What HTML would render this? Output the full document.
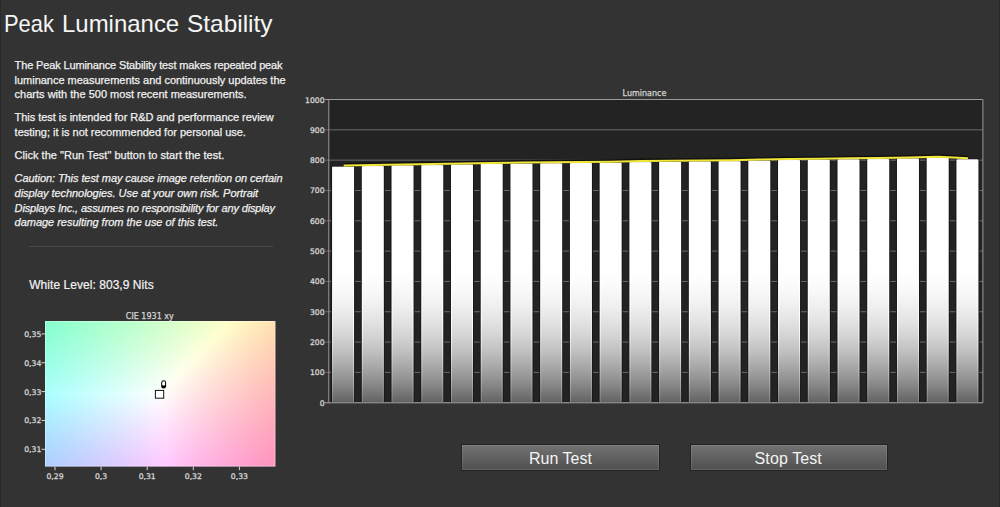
<!DOCTYPE html>
<html lang="en"><head><meta charset="utf-8"><title>Peak Luminance Stability</title>
<style>
html,body{margin:0;padding:0;background:#333333;}
body{width:1000px;height:507px;position:relative;overflow:hidden;font-family:"Liberation Sans",sans-serif;color:#f2f2f2;}
.t{position:absolute;white-space:pre;line-height:1;}
.p{font-size:11px;left:14.6px;color:#f0f0f0;-webkit-text-stroke:0.25px #f0f0f0;}
.i{font-style:italic;}
.btn{position:absolute;top:443.5px;height:25px;width:196.3px;border:1px solid #242424;box-shadow:inset 0 0 0 1px rgba(255,255,255,0.10);background:linear-gradient(#727272,#505050);color:#f4f4f4;font-size:16px;text-align:center;line-height:27.6px;}
svg{position:absolute;left:0;top:0;}
svg text{font-family:"DejaVu Sans","Liberation Sans",sans-serif;}
</style></head><body>
<div id="title" style="position:absolute;left:0;top:11.6px;height:24px;font-size:24px;line-height:1;color:#f6f6f6;white-space:pre;"><span style="position:absolute;left:4.2px;top:0;display:inline-block;transform-origin:0 0;transform:scaleX(0.913);">Peak</span> <span style="position:absolute;left:62.0px;top:0;display:inline-block;transform-origin:0 0;transform:scaleX(0.998);">Luminance</span> <span style="position:absolute;left:186.8px;top:0;display:inline-block;transform-origin:0 0;transform:scaleX(1.018);">Stability</span></div>
<div class="t p" style="top:60.00px;letter-spacing:-0.138px;">The Peak Luminance Stability test makes repeated peak</div>
<div class="t p" style="top:74.60px;letter-spacing:-0.022px;">luminance measurements and continuously updates the</div>
<div class="t p" style="top:89.00px;letter-spacing:0.006px;">charts with the 500 most recent measurements.</div>
<div class="t p" style="top:111.90px;letter-spacing:-0.040px;">This test is intended for R&amp;D and performance review</div>
<div class="t p" style="top:126.50px;letter-spacing:-0.009px;">testing; it is not recommended for personal use.</div>
<div class="t p" style="top:150.10px;letter-spacing:0.023px;">Click the "Run Test" button to start the test.</div>
<div class="t p i" style="top:173.30px;letter-spacing:-0.076px;">Caution: This test may cause image retention on certain</div>
<div class="t p i" style="top:187.90px;letter-spacing:-0.055px;">display technologies. Use at your own risk. Portrait</div>
<div class="t p i" style="top:202.50px;letter-spacing:-0.144px;">Displays Inc., assumes no responsibility for any display</div>
<div class="t p i" style="top:217.00px;letter-spacing:-0.025px;">damage resulting from the use of this test.</div>
<div style="position:absolute;left:0;top:0;width:1px;height:507px;background:#2a2a2a;"></div><div style="position:absolute;left:999px;top:0;width:1px;height:507px;background:#2b2b2b;"></div>
<div style="position:absolute;left:29px;top:245.5px;width:244px;height:1px;background:#4a4a4a;"></div>
<div class="t" style="left:29.2px;top:279px;font-size:12px;letter-spacing:0.05px;color:#f2f2f2;-webkit-text-stroke:0.2px #f2f2f2;">White Level: 803,9 Nits</div>
<div class="btn" style="left:461.3px;">Run Test</div>
<div class="btn" style="left:689.6px;letter-spacing:0.1px;text-indent:-1px;">Stop Test</div>
<svg width="1000" height="507" viewBox="0 0 1000 507">
<defs>
<linearGradient id="bar" gradientUnits="userSpaceOnUse" x1="0" y1="140" x2="0" y2="403"><stop offset="0.0000" stop-color="#ffffff"/><stop offset="0.4639" stop-color="#ffffff"/><stop offset="0.5133" stop-color="#fefefe"/><stop offset="0.5703" stop-color="#f9f9f9"/><stop offset="0.6274" stop-color="#f0f0f0"/><stop offset="0.6844" stop-color="#e4e4e4"/><stop offset="0.7414" stop-color="#d5d5d5"/><stop offset="0.7985" stop-color="#c2c2c2"/><stop offset="0.8555" stop-color="#ababab"/><stop offset="0.9125" stop-color="#919191"/><stop offset="0.9506" stop-color="#7d7d7d"/><stop offset="1.0000" stop-color="#616161"/></linearGradient>
<linearGradient id="bare" gradientUnits="userSpaceOnUse" x1="0" y1="140" x2="0" y2="403"><stop offset="0.0000" stop-color="#ffffff"/><stop offset="0.4639" stop-color="#ffffff"/><stop offset="0.5133" stop-color="#ffffff"/><stop offset="0.5703" stop-color="#ffffff"/><stop offset="0.6274" stop-color="#ffffff"/><stop offset="0.6844" stop-color="#ffffff"/><stop offset="0.7414" stop-color="#f7f7f7"/><stop offset="0.7985" stop-color="#e4e4e4"/><stop offset="0.8555" stop-color="#cdcdcd"/><stop offset="0.9125" stop-color="#b3b3b3"/><stop offset="0.9506" stop-color="#9f9f9f"/><stop offset="1.0000" stop-color="#838383"/></linearGradient>
<linearGradient id="c0"><stop offset="0.0000" stop-color="#86ffcd"/><stop offset="0.0435" stop-color="#8cffcd"/><stop offset="0.0870" stop-color="#92ffcd"/><stop offset="0.1304" stop-color="#98ffcd"/><stop offset="0.1739" stop-color="#9effcc"/><stop offset="0.2174" stop-color="#a4ffcc"/><stop offset="0.2609" stop-color="#aaffcc"/><stop offset="0.3043" stop-color="#b1ffcb"/><stop offset="0.3478" stop-color="#b7ffcb"/><stop offset="0.3913" stop-color="#beffcb"/><stop offset="0.4348" stop-color="#c4ffcb"/><stop offset="0.4783" stop-color="#cbffca"/><stop offset="0.5217" stop-color="#d2ffca"/><stop offset="0.5652" stop-color="#d8ffca"/><stop offset="0.6087" stop-color="#dfffc9"/><stop offset="0.6522" stop-color="#e6ffc9"/><stop offset="0.6957" stop-color="#edffc9"/><stop offset="0.7391" stop-color="#f5ffc8"/><stop offset="0.7826" stop-color="#fcffc8"/><stop offset="0.8261" stop-color="#fffbc5"/><stop offset="0.8696" stop-color="#fff4bf"/><stop offset="0.9130" stop-color="#ffedb9"/><stop offset="0.9565" stop-color="#ffe7b4"/><stop offset="1.0000" stop-color="#ffe1af"/></linearGradient>
<linearGradient id="c1"><stop offset="0.0000" stop-color="#87ffcf"/><stop offset="0.0435" stop-color="#8dffce"/><stop offset="0.0870" stop-color="#93ffce"/><stop offset="0.1304" stop-color="#99ffce"/><stop offset="0.1739" stop-color="#9fffcd"/><stop offset="0.2174" stop-color="#a5ffcd"/><stop offset="0.2609" stop-color="#abffcd"/><stop offset="0.3043" stop-color="#b2ffcd"/><stop offset="0.3478" stop-color="#b8ffcc"/><stop offset="0.3913" stop-color="#bfffcc"/><stop offset="0.4348" stop-color="#c5ffcc"/><stop offset="0.4783" stop-color="#ccffcc"/><stop offset="0.5217" stop-color="#d3ffcb"/><stop offset="0.5652" stop-color="#daffcb"/><stop offset="0.6087" stop-color="#e1ffcb"/><stop offset="0.6522" stop-color="#e8ffca"/><stop offset="0.6957" stop-color="#efffca"/><stop offset="0.7391" stop-color="#f6ffca"/><stop offset="0.7826" stop-color="#fdffc9"/><stop offset="0.8261" stop-color="#fffac5"/><stop offset="0.8696" stop-color="#fff3bf"/><stop offset="0.9130" stop-color="#ffecba"/><stop offset="0.9565" stop-color="#ffe6b4"/><stop offset="1.0000" stop-color="#ffe0af"/></linearGradient>
<linearGradient id="c2"><stop offset="0.0000" stop-color="#87ffd0"/><stop offset="0.0435" stop-color="#8dffcf"/><stop offset="0.0870" stop-color="#94ffcf"/><stop offset="0.1304" stop-color="#9affcf"/><stop offset="0.1739" stop-color="#a0ffcf"/><stop offset="0.2174" stop-color="#a6ffce"/><stop offset="0.2609" stop-color="#acffce"/><stop offset="0.3043" stop-color="#b3ffce"/><stop offset="0.3478" stop-color="#b9ffce"/><stop offset="0.3913" stop-color="#c0ffcd"/><stop offset="0.4348" stop-color="#c7ffcd"/><stop offset="0.4783" stop-color="#cdffcd"/><stop offset="0.5217" stop-color="#d4ffcd"/><stop offset="0.5652" stop-color="#dbffcc"/><stop offset="0.6087" stop-color="#e2ffcc"/><stop offset="0.6522" stop-color="#e9ffcc"/><stop offset="0.6957" stop-color="#f0ffcb"/><stop offset="0.7391" stop-color="#f7ffcb"/><stop offset="0.7826" stop-color="#ffffcb"/><stop offset="0.8261" stop-color="#fff8c5"/><stop offset="0.8696" stop-color="#fff1bf"/><stop offset="0.9130" stop-color="#ffebba"/><stop offset="0.9565" stop-color="#ffe4b4"/><stop offset="1.0000" stop-color="#ffdeaf"/></linearGradient>
<linearGradient id="c3"><stop offset="0.0000" stop-color="#88ffd1"/><stop offset="0.0435" stop-color="#8effd1"/><stop offset="0.0870" stop-color="#94ffd0"/><stop offset="0.1304" stop-color="#9bffd0"/><stop offset="0.1739" stop-color="#a1ffd0"/><stop offset="0.2174" stop-color="#a7ffd0"/><stop offset="0.2609" stop-color="#aeffcf"/><stop offset="0.3043" stop-color="#b4ffcf"/><stop offset="0.3478" stop-color="#baffcf"/><stop offset="0.3913" stop-color="#c1ffcf"/><stop offset="0.4348" stop-color="#c8ffce"/><stop offset="0.4783" stop-color="#ceffce"/><stop offset="0.5217" stop-color="#d5ffce"/><stop offset="0.5652" stop-color="#dcffce"/><stop offset="0.6087" stop-color="#e3ffcd"/><stop offset="0.6522" stop-color="#eaffcd"/><stop offset="0.6957" stop-color="#f1ffcd"/><stop offset="0.7391" stop-color="#f9ffcc"/><stop offset="0.7826" stop-color="#fffecb"/><stop offset="0.8261" stop-color="#fff7c5"/><stop offset="0.8696" stop-color="#fff0c0"/><stop offset="0.9130" stop-color="#ffe9ba"/><stop offset="0.9565" stop-color="#ffe3b5"/><stop offset="1.0000" stop-color="#ffddb0"/></linearGradient>
<linearGradient id="c4"><stop offset="0.0000" stop-color="#89ffd2"/><stop offset="0.0435" stop-color="#8fffd2"/><stop offset="0.0870" stop-color="#95ffd2"/><stop offset="0.1304" stop-color="#9cffd1"/><stop offset="0.1739" stop-color="#a2ffd1"/><stop offset="0.2174" stop-color="#a8ffd1"/><stop offset="0.2609" stop-color="#afffd1"/><stop offset="0.3043" stop-color="#b5ffd0"/><stop offset="0.3478" stop-color="#bcffd0"/><stop offset="0.3913" stop-color="#c2ffd0"/><stop offset="0.4348" stop-color="#c9ffd0"/><stop offset="0.4783" stop-color="#d0ffcf"/><stop offset="0.5217" stop-color="#d7ffcf"/><stop offset="0.5652" stop-color="#ddffcf"/><stop offset="0.6087" stop-color="#e5ffcf"/><stop offset="0.6522" stop-color="#ecffce"/><stop offset="0.6957" stop-color="#f3ffce"/><stop offset="0.7391" stop-color="#faffce"/><stop offset="0.7826" stop-color="#fffdcc"/><stop offset="0.8261" stop-color="#fff5c5"/><stop offset="0.8696" stop-color="#ffefc0"/><stop offset="0.9130" stop-color="#ffe8ba"/><stop offset="0.9565" stop-color="#ffe2b5"/><stop offset="1.0000" stop-color="#ffdcb0"/></linearGradient>
<linearGradient id="c5"><stop offset="0.0000" stop-color="#8affd3"/><stop offset="0.0435" stop-color="#90ffd3"/><stop offset="0.0870" stop-color="#96ffd3"/><stop offset="0.1304" stop-color="#9dffd3"/><stop offset="0.1739" stop-color="#a3ffd3"/><stop offset="0.2174" stop-color="#a9ffd2"/><stop offset="0.2609" stop-color="#b0ffd2"/><stop offset="0.3043" stop-color="#b6ffd2"/><stop offset="0.3478" stop-color="#bdffd2"/><stop offset="0.3913" stop-color="#c3ffd1"/><stop offset="0.4348" stop-color="#caffd1"/><stop offset="0.4783" stop-color="#d1ffd1"/><stop offset="0.5217" stop-color="#d8ffd0"/><stop offset="0.5652" stop-color="#dfffd0"/><stop offset="0.6087" stop-color="#e6ffd0"/><stop offset="0.6522" stop-color="#edffd0"/><stop offset="0.6957" stop-color="#f4ffcf"/><stop offset="0.7391" stop-color="#fbffcf"/><stop offset="0.7826" stop-color="#fffbcc"/><stop offset="0.8261" stop-color="#fff4c6"/><stop offset="0.8696" stop-color="#ffedc0"/><stop offset="0.9130" stop-color="#ffe7ba"/><stop offset="0.9565" stop-color="#ffe1b5"/><stop offset="1.0000" stop-color="#ffdbb0"/></linearGradient>
<linearGradient id="c6"><stop offset="0.0000" stop-color="#8bffd5"/><stop offset="0.0435" stop-color="#91ffd4"/><stop offset="0.0870" stop-color="#97ffd4"/><stop offset="0.1304" stop-color="#9effd4"/><stop offset="0.1739" stop-color="#a4ffd4"/><stop offset="0.2174" stop-color="#aaffd4"/><stop offset="0.2609" stop-color="#b1ffd3"/><stop offset="0.3043" stop-color="#b7ffd3"/><stop offset="0.3478" stop-color="#beffd3"/><stop offset="0.3913" stop-color="#c5ffd3"/><stop offset="0.4348" stop-color="#cbffd2"/><stop offset="0.4783" stop-color="#d2ffd2"/><stop offset="0.5217" stop-color="#d9ffd2"/><stop offset="0.5652" stop-color="#e0ffd2"/><stop offset="0.6087" stop-color="#e7ffd1"/><stop offset="0.6522" stop-color="#eeffd1"/><stop offset="0.6957" stop-color="#f6ffd1"/><stop offset="0.7391" stop-color="#fdffd0"/><stop offset="0.7826" stop-color="#fffacc"/><stop offset="0.8261" stop-color="#fff3c6"/><stop offset="0.8696" stop-color="#ffecc0"/><stop offset="0.9130" stop-color="#ffe6bb"/><stop offset="0.9565" stop-color="#ffdfb5"/><stop offset="1.0000" stop-color="#ffd9b0"/></linearGradient>
<linearGradient id="c7"><stop offset="0.0000" stop-color="#8cffd6"/><stop offset="0.0435" stop-color="#92ffd6"/><stop offset="0.0870" stop-color="#98ffd6"/><stop offset="0.1304" stop-color="#9fffd5"/><stop offset="0.1739" stop-color="#a5ffd5"/><stop offset="0.2174" stop-color="#abffd5"/><stop offset="0.2609" stop-color="#b2ffd5"/><stop offset="0.3043" stop-color="#b8ffd4"/><stop offset="0.3478" stop-color="#bfffd4"/><stop offset="0.3913" stop-color="#c6ffd4"/><stop offset="0.4348" stop-color="#ccffd4"/><stop offset="0.4783" stop-color="#d3ffd3"/><stop offset="0.5217" stop-color="#daffd3"/><stop offset="0.5652" stop-color="#e1ffd3"/><stop offset="0.6087" stop-color="#e8ffd3"/><stop offset="0.6522" stop-color="#f0ffd2"/><stop offset="0.6957" stop-color="#f7ffd2"/><stop offset="0.7391" stop-color="#feffd2"/><stop offset="0.7826" stop-color="#fff8cc"/><stop offset="0.8261" stop-color="#fff1c6"/><stop offset="0.8696" stop-color="#ffebc0"/><stop offset="0.9130" stop-color="#ffe4bb"/><stop offset="0.9565" stop-color="#ffdeb6"/><stop offset="1.0000" stop-color="#ffd8b1"/></linearGradient>
<linearGradient id="c8"><stop offset="0.0000" stop-color="#8dffd7"/><stop offset="0.0435" stop-color="#93ffd7"/><stop offset="0.0870" stop-color="#99ffd7"/><stop offset="0.1304" stop-color="#a0ffd7"/><stop offset="0.1739" stop-color="#a6ffd6"/><stop offset="0.2174" stop-color="#acffd6"/><stop offset="0.2609" stop-color="#b3ffd6"/><stop offset="0.3043" stop-color="#b9ffd6"/><stop offset="0.3478" stop-color="#c0ffd5"/><stop offset="0.3913" stop-color="#c7ffd5"/><stop offset="0.4348" stop-color="#ceffd5"/><stop offset="0.4783" stop-color="#d5ffd5"/><stop offset="0.5217" stop-color="#dcffd5"/><stop offset="0.5652" stop-color="#e3ffd4"/><stop offset="0.6087" stop-color="#eaffd4"/><stop offset="0.6522" stop-color="#f1ffd4"/><stop offset="0.6957" stop-color="#f8ffd4"/><stop offset="0.7391" stop-color="#fffed3"/><stop offset="0.7826" stop-color="#fff7cc"/><stop offset="0.8261" stop-color="#fff0c6"/><stop offset="0.8696" stop-color="#ffe9c1"/><stop offset="0.9130" stop-color="#ffe3bb"/><stop offset="0.9565" stop-color="#ffddb6"/><stop offset="1.0000" stop-color="#ffd7b1"/></linearGradient>
<linearGradient id="c9"><stop offset="0.0000" stop-color="#8effd9"/><stop offset="0.0435" stop-color="#94ffd8"/><stop offset="0.0870" stop-color="#9affd8"/><stop offset="0.1304" stop-color="#a1ffd8"/><stop offset="0.1739" stop-color="#a7ffd8"/><stop offset="0.2174" stop-color="#adffd7"/><stop offset="0.2609" stop-color="#b4ffd7"/><stop offset="0.3043" stop-color="#bbffd7"/><stop offset="0.3478" stop-color="#c1ffd7"/><stop offset="0.3913" stop-color="#c8ffd7"/><stop offset="0.4348" stop-color="#cfffd6"/><stop offset="0.4783" stop-color="#d6ffd6"/><stop offset="0.5217" stop-color="#ddffd6"/><stop offset="0.5652" stop-color="#e4ffd6"/><stop offset="0.6087" stop-color="#ebffd5"/><stop offset="0.6522" stop-color="#f2ffd5"/><stop offset="0.6957" stop-color="#faffd5"/><stop offset="0.7391" stop-color="#fffdd3"/><stop offset="0.7826" stop-color="#fff6cd"/><stop offset="0.8261" stop-color="#ffefc7"/><stop offset="0.8696" stop-color="#ffe8c1"/><stop offset="0.9130" stop-color="#ffe2bb"/><stop offset="0.9565" stop-color="#ffdcb6"/><stop offset="1.0000" stop-color="#ffd6b1"/></linearGradient>
<linearGradient id="c10"><stop offset="0.0000" stop-color="#8fffda"/><stop offset="0.0435" stop-color="#95ffda"/><stop offset="0.0870" stop-color="#9bffd9"/><stop offset="0.1304" stop-color="#a2ffd9"/><stop offset="0.1739" stop-color="#a8ffd9"/><stop offset="0.2174" stop-color="#afffd9"/><stop offset="0.2609" stop-color="#b5ffd9"/><stop offset="0.3043" stop-color="#bcffd8"/><stop offset="0.3478" stop-color="#c2ffd8"/><stop offset="0.3913" stop-color="#c9ffd8"/><stop offset="0.4348" stop-color="#d0ffd8"/><stop offset="0.4783" stop-color="#d7ffd7"/><stop offset="0.5217" stop-color="#deffd7"/><stop offset="0.5652" stop-color="#e5ffd7"/><stop offset="0.6087" stop-color="#ecffd7"/><stop offset="0.6522" stop-color="#f4ffd7"/><stop offset="0.6957" stop-color="#fbffd6"/><stop offset="0.7391" stop-color="#fffbd3"/><stop offset="0.7826" stop-color="#fff4cd"/><stop offset="0.8261" stop-color="#ffedc7"/><stop offset="0.8696" stop-color="#ffe7c1"/><stop offset="0.9130" stop-color="#ffe1bc"/><stop offset="0.9565" stop-color="#ffdab6"/><stop offset="1.0000" stop-color="#ffd5b1"/></linearGradient>
<linearGradient id="c11"><stop offset="0.0000" stop-color="#90ffdb"/><stop offset="0.0435" stop-color="#96ffdb"/><stop offset="0.0870" stop-color="#9cffdb"/><stop offset="0.1304" stop-color="#a3ffda"/><stop offset="0.1739" stop-color="#a9ffda"/><stop offset="0.2174" stop-color="#b0ffda"/><stop offset="0.2609" stop-color="#b6ffda"/><stop offset="0.3043" stop-color="#bdffda"/><stop offset="0.3478" stop-color="#c4ffd9"/><stop offset="0.3913" stop-color="#caffd9"/><stop offset="0.4348" stop-color="#d1ffd9"/><stop offset="0.4783" stop-color="#d8ffd9"/><stop offset="0.5217" stop-color="#dfffd9"/><stop offset="0.5652" stop-color="#e7ffd8"/><stop offset="0.6087" stop-color="#eeffd8"/><stop offset="0.6522" stop-color="#f5ffd8"/><stop offset="0.6957" stop-color="#fdffd8"/><stop offset="0.7391" stop-color="#fffad3"/><stop offset="0.7826" stop-color="#fff3cd"/><stop offset="0.8261" stop-color="#ffecc7"/><stop offset="0.8696" stop-color="#ffe6c1"/><stop offset="0.9130" stop-color="#ffdfbc"/><stop offset="0.9565" stop-color="#ffd9b7"/><stop offset="1.0000" stop-color="#ffd4b2"/></linearGradient>
<linearGradient id="c12"><stop offset="0.0000" stop-color="#91ffdc"/><stop offset="0.0435" stop-color="#97ffdc"/><stop offset="0.0870" stop-color="#9dffdc"/><stop offset="0.1304" stop-color="#a4ffdc"/><stop offset="0.1739" stop-color="#aaffdc"/><stop offset="0.2174" stop-color="#b1ffdb"/><stop offset="0.2609" stop-color="#b7ffdb"/><stop offset="0.3043" stop-color="#beffdb"/><stop offset="0.3478" stop-color="#c5ffdb"/><stop offset="0.3913" stop-color="#ccffdb"/><stop offset="0.4348" stop-color="#d3ffda"/><stop offset="0.4783" stop-color="#daffda"/><stop offset="0.5217" stop-color="#e1ffda"/><stop offset="0.5652" stop-color="#e8ffda"/><stop offset="0.6087" stop-color="#efffda"/><stop offset="0.6522" stop-color="#f7ffd9"/><stop offset="0.6957" stop-color="#feffd9"/><stop offset="0.7391" stop-color="#fff9d3"/><stop offset="0.7826" stop-color="#fff1cd"/><stop offset="0.8261" stop-color="#ffebc7"/><stop offset="0.8696" stop-color="#ffe4c2"/><stop offset="0.9130" stop-color="#ffdebc"/><stop offset="0.9565" stop-color="#ffd8b7"/><stop offset="1.0000" stop-color="#ffd2b2"/></linearGradient>
<linearGradient id="c13"><stop offset="0.0000" stop-color="#92ffde"/><stop offset="0.0435" stop-color="#98ffde"/><stop offset="0.0870" stop-color="#9effdd"/><stop offset="0.1304" stop-color="#a5ffdd"/><stop offset="0.1739" stop-color="#abffdd"/><stop offset="0.2174" stop-color="#b2ffdd"/><stop offset="0.2609" stop-color="#b8ffdd"/><stop offset="0.3043" stop-color="#bfffdc"/><stop offset="0.3478" stop-color="#c6ffdc"/><stop offset="0.3913" stop-color="#cdffdc"/><stop offset="0.4348" stop-color="#d4ffdc"/><stop offset="0.4783" stop-color="#dbffdc"/><stop offset="0.5217" stop-color="#e2ffdb"/><stop offset="0.5652" stop-color="#e9ffdb"/><stop offset="0.6087" stop-color="#f1ffdb"/><stop offset="0.6522" stop-color="#f8ffdb"/><stop offset="0.6957" stop-color="#fffeda"/><stop offset="0.7391" stop-color="#fff7d4"/><stop offset="0.7826" stop-color="#fff0cd"/><stop offset="0.8261" stop-color="#ffe9c7"/><stop offset="0.8696" stop-color="#ffe3c2"/><stop offset="0.9130" stop-color="#ffddbc"/><stop offset="0.9565" stop-color="#ffd7b7"/><stop offset="1.0000" stop-color="#ffd1b2"/></linearGradient>
<linearGradient id="c14"><stop offset="0.0000" stop-color="#93ffdf"/><stop offset="0.0435" stop-color="#99ffdf"/><stop offset="0.0870" stop-color="#9fffdf"/><stop offset="0.1304" stop-color="#a6ffde"/><stop offset="0.1739" stop-color="#acffde"/><stop offset="0.2174" stop-color="#b3ffde"/><stop offset="0.2609" stop-color="#baffde"/><stop offset="0.3043" stop-color="#c0ffde"/><stop offset="0.3478" stop-color="#c7ffde"/><stop offset="0.3913" stop-color="#ceffdd"/><stop offset="0.4348" stop-color="#d5ffdd"/><stop offset="0.4783" stop-color="#dcffdd"/><stop offset="0.5217" stop-color="#e3ffdd"/><stop offset="0.5652" stop-color="#ebffdd"/><stop offset="0.6087" stop-color="#f2ffdc"/><stop offset="0.6522" stop-color="#f9ffdc"/><stop offset="0.6957" stop-color="#fffdda"/><stop offset="0.7391" stop-color="#fff6d4"/><stop offset="0.7826" stop-color="#ffefce"/><stop offset="0.8261" stop-color="#ffe8c8"/><stop offset="0.8696" stop-color="#ffe2c2"/><stop offset="0.9130" stop-color="#ffdcbc"/><stop offset="0.9565" stop-color="#ffd6b7"/><stop offset="1.0000" stop-color="#ffd0b2"/></linearGradient>
<linearGradient id="c15"><stop offset="0.0000" stop-color="#94ffe0"/><stop offset="0.0435" stop-color="#9affe0"/><stop offset="0.0870" stop-color="#a0ffe0"/><stop offset="0.1304" stop-color="#a7ffe0"/><stop offset="0.1739" stop-color="#adffe0"/><stop offset="0.2174" stop-color="#b4ffdf"/><stop offset="0.2609" stop-color="#bbffdf"/><stop offset="0.3043" stop-color="#c1ffdf"/><stop offset="0.3478" stop-color="#c8ffdf"/><stop offset="0.3913" stop-color="#cfffdf"/><stop offset="0.4348" stop-color="#d6ffdf"/><stop offset="0.4783" stop-color="#ddffde"/><stop offset="0.5217" stop-color="#e5ffde"/><stop offset="0.5652" stop-color="#ecffde"/><stop offset="0.6087" stop-color="#f3ffde"/><stop offset="0.6522" stop-color="#fbffde"/><stop offset="0.6957" stop-color="#fffcdb"/><stop offset="0.7391" stop-color="#fff4d4"/><stop offset="0.7826" stop-color="#ffedce"/><stop offset="0.8261" stop-color="#ffe7c8"/><stop offset="0.8696" stop-color="#ffe0c2"/><stop offset="0.9130" stop-color="#ffdabd"/><stop offset="0.9565" stop-color="#ffd4b7"/><stop offset="1.0000" stop-color="#ffcfb2"/></linearGradient>
<linearGradient id="c16"><stop offset="0.0000" stop-color="#95ffe2"/><stop offset="0.0435" stop-color="#9bffe2"/><stop offset="0.0870" stop-color="#a1ffe1"/><stop offset="0.1304" stop-color="#a8ffe1"/><stop offset="0.1739" stop-color="#aeffe1"/><stop offset="0.2174" stop-color="#b5ffe1"/><stop offset="0.2609" stop-color="#bcffe1"/><stop offset="0.3043" stop-color="#c3ffe1"/><stop offset="0.3478" stop-color="#caffe0"/><stop offset="0.3913" stop-color="#d1ffe0"/><stop offset="0.4348" stop-color="#d8ffe0"/><stop offset="0.4783" stop-color="#dfffe0"/><stop offset="0.5217" stop-color="#e6ffe0"/><stop offset="0.5652" stop-color="#edffdf"/><stop offset="0.6087" stop-color="#f5ffdf"/><stop offset="0.6522" stop-color="#fcffdf"/><stop offset="0.6957" stop-color="#fffadb"/><stop offset="0.7391" stop-color="#fff3d4"/><stop offset="0.7826" stop-color="#ffecce"/><stop offset="0.8261" stop-color="#ffe5c8"/><stop offset="0.8696" stop-color="#ffdfc2"/><stop offset="0.9130" stop-color="#ffd9bd"/><stop offset="0.9565" stop-color="#ffd3b8"/><stop offset="1.0000" stop-color="#ffceb3"/></linearGradient>
<linearGradient id="c17"><stop offset="0.0000" stop-color="#96ffe3"/><stop offset="0.0435" stop-color="#9cffe3"/><stop offset="0.0870" stop-color="#a2ffe3"/><stop offset="0.1304" stop-color="#a9ffe3"/><stop offset="0.1739" stop-color="#b0ffe2"/><stop offset="0.2174" stop-color="#b6ffe2"/><stop offset="0.2609" stop-color="#bdffe2"/><stop offset="0.3043" stop-color="#c4ffe2"/><stop offset="0.3478" stop-color="#cbffe2"/><stop offset="0.3913" stop-color="#d2ffe2"/><stop offset="0.4348" stop-color="#d9ffe1"/><stop offset="0.4783" stop-color="#e0ffe1"/><stop offset="0.5217" stop-color="#e7ffe1"/><stop offset="0.5652" stop-color="#efffe1"/><stop offset="0.6087" stop-color="#f6ffe1"/><stop offset="0.6522" stop-color="#feffe1"/><stop offset="0.6957" stop-color="#fff9db"/><stop offset="0.7391" stop-color="#fff2d4"/><stop offset="0.7826" stop-color="#ffebce"/><stop offset="0.8261" stop-color="#ffe4c8"/><stop offset="0.8696" stop-color="#ffdec3"/><stop offset="0.9130" stop-color="#ffd8bd"/><stop offset="0.9565" stop-color="#ffd2b8"/><stop offset="1.0000" stop-color="#ffcdb3"/></linearGradient>
<linearGradient id="c18"><stop offset="0.0000" stop-color="#97ffe4"/><stop offset="0.0435" stop-color="#9dffe4"/><stop offset="0.0870" stop-color="#a3ffe4"/><stop offset="0.1304" stop-color="#aaffe4"/><stop offset="0.1739" stop-color="#b1ffe4"/><stop offset="0.2174" stop-color="#b7ffe4"/><stop offset="0.2609" stop-color="#beffe3"/><stop offset="0.3043" stop-color="#c5ffe3"/><stop offset="0.3478" stop-color="#ccffe3"/><stop offset="0.3913" stop-color="#d3ffe3"/><stop offset="0.4348" stop-color="#daffe3"/><stop offset="0.4783" stop-color="#e1ffe3"/><stop offset="0.5217" stop-color="#e9ffe3"/><stop offset="0.5652" stop-color="#f0ffe2"/><stop offset="0.6087" stop-color="#f8ffe2"/><stop offset="0.6522" stop-color="#ffffe2"/><stop offset="0.6957" stop-color="#fff7db"/><stop offset="0.7391" stop-color="#fff0d5"/><stop offset="0.7826" stop-color="#ffe9ce"/><stop offset="0.8261" stop-color="#ffe3c8"/><stop offset="0.8696" stop-color="#ffddc3"/><stop offset="0.9130" stop-color="#ffd7bd"/><stop offset="0.9565" stop-color="#ffd1b8"/><stop offset="1.0000" stop-color="#ffcbb3"/></linearGradient>
<linearGradient id="c19"><stop offset="0.0000" stop-color="#98ffe6"/><stop offset="0.0435" stop-color="#9effe6"/><stop offset="0.0870" stop-color="#a4ffe5"/><stop offset="0.1304" stop-color="#abffe5"/><stop offset="0.1739" stop-color="#b2ffe5"/><stop offset="0.2174" stop-color="#b8ffe5"/><stop offset="0.2609" stop-color="#bfffe5"/><stop offset="0.3043" stop-color="#c6ffe5"/><stop offset="0.3478" stop-color="#cdffe5"/><stop offset="0.3913" stop-color="#d4ffe4"/><stop offset="0.4348" stop-color="#dbffe4"/><stop offset="0.4783" stop-color="#e3ffe4"/><stop offset="0.5217" stop-color="#eaffe4"/><stop offset="0.5652" stop-color="#f2ffe4"/><stop offset="0.6087" stop-color="#f9ffe4"/><stop offset="0.6522" stop-color="#fffde2"/><stop offset="0.6957" stop-color="#fff6db"/><stop offset="0.7391" stop-color="#ffefd5"/><stop offset="0.7826" stop-color="#ffe8cf"/><stop offset="0.8261" stop-color="#ffe2c9"/><stop offset="0.8696" stop-color="#ffdbc3"/><stop offset="0.9130" stop-color="#ffd5be"/><stop offset="0.9565" stop-color="#ffd0b8"/><stop offset="1.0000" stop-color="#ffcab3"/></linearGradient>
<linearGradient id="c20"><stop offset="0.0000" stop-color="#99ffe7"/><stop offset="0.0435" stop-color="#9fffe7"/><stop offset="0.0870" stop-color="#a6ffe7"/><stop offset="0.1304" stop-color="#acffe7"/><stop offset="0.1739" stop-color="#b3ffe7"/><stop offset="0.2174" stop-color="#baffe6"/><stop offset="0.2609" stop-color="#c0ffe6"/><stop offset="0.3043" stop-color="#c7ffe6"/><stop offset="0.3478" stop-color="#ceffe6"/><stop offset="0.3913" stop-color="#d6ffe6"/><stop offset="0.4348" stop-color="#ddffe6"/><stop offset="0.4783" stop-color="#e4ffe6"/><stop offset="0.5217" stop-color="#ebffe5"/><stop offset="0.5652" stop-color="#f3ffe5"/><stop offset="0.6087" stop-color="#fbffe5"/><stop offset="0.6522" stop-color="#fffce2"/><stop offset="0.6957" stop-color="#fff4db"/><stop offset="0.7391" stop-color="#ffedd5"/><stop offset="0.7826" stop-color="#ffe7cf"/><stop offset="0.8261" stop-color="#ffe0c9"/><stop offset="0.8696" stop-color="#ffdac3"/><stop offset="0.9130" stop-color="#ffd4be"/><stop offset="0.9565" stop-color="#ffcfb9"/><stop offset="1.0000" stop-color="#ffc9b4"/></linearGradient>
<linearGradient id="c21"><stop offset="0.0000" stop-color="#9affe8"/><stop offset="0.0435" stop-color="#a0ffe8"/><stop offset="0.0870" stop-color="#a7ffe8"/><stop offset="0.1304" stop-color="#adffe8"/><stop offset="0.1739" stop-color="#b4ffe8"/><stop offset="0.2174" stop-color="#bbffe8"/><stop offset="0.2609" stop-color="#c2ffe8"/><stop offset="0.3043" stop-color="#c9ffe8"/><stop offset="0.3478" stop-color="#d0ffe7"/><stop offset="0.3913" stop-color="#d7ffe7"/><stop offset="0.4348" stop-color="#deffe7"/><stop offset="0.4783" stop-color="#e5ffe7"/><stop offset="0.5217" stop-color="#edffe7"/><stop offset="0.5652" stop-color="#f4ffe7"/><stop offset="0.6087" stop-color="#fcffe7"/><stop offset="0.6522" stop-color="#fffae2"/><stop offset="0.6957" stop-color="#fff3dc"/><stop offset="0.7391" stop-color="#ffecd5"/><stop offset="0.7826" stop-color="#ffe5cf"/><stop offset="0.8261" stop-color="#ffdfc9"/><stop offset="0.8696" stop-color="#ffd9c3"/><stop offset="0.9130" stop-color="#ffd3be"/><stop offset="0.9565" stop-color="#ffcdb9"/><stop offset="1.0000" stop-color="#ffc8b4"/></linearGradient>
<linearGradient id="c22"><stop offset="0.0000" stop-color="#9bffea"/><stop offset="0.0435" stop-color="#a1ffea"/><stop offset="0.0870" stop-color="#a8ffea"/><stop offset="0.1304" stop-color="#aeffea"/><stop offset="0.1739" stop-color="#b5ffe9"/><stop offset="0.2174" stop-color="#bcffe9"/><stop offset="0.2609" stop-color="#c3ffe9"/><stop offset="0.3043" stop-color="#caffe9"/><stop offset="0.3478" stop-color="#d1ffe9"/><stop offset="0.3913" stop-color="#d8ffe9"/><stop offset="0.4348" stop-color="#dfffe9"/><stop offset="0.4783" stop-color="#e7ffe9"/><stop offset="0.5217" stop-color="#eeffe8"/><stop offset="0.5652" stop-color="#f6ffe8"/><stop offset="0.6087" stop-color="#fdffe8"/><stop offset="0.6522" stop-color="#fff9e3"/><stop offset="0.6957" stop-color="#fff2dc"/><stop offset="0.7391" stop-color="#ffebd5"/><stop offset="0.7826" stop-color="#ffe4cf"/><stop offset="0.8261" stop-color="#ffdec9"/><stop offset="0.8696" stop-color="#ffd8c4"/><stop offset="0.9130" stop-color="#ffd2be"/><stop offset="0.9565" stop-color="#ffccb9"/><stop offset="1.0000" stop-color="#ffc7b4"/></linearGradient>
<linearGradient id="c23"><stop offset="0.0000" stop-color="#9cffeb"/><stop offset="0.0435" stop-color="#a2ffeb"/><stop offset="0.0870" stop-color="#a9ffeb"/><stop offset="0.1304" stop-color="#afffeb"/><stop offset="0.1739" stop-color="#b6ffeb"/><stop offset="0.2174" stop-color="#bdffeb"/><stop offset="0.2609" stop-color="#c4ffeb"/><stop offset="0.3043" stop-color="#cbffeb"/><stop offset="0.3478" stop-color="#d2ffea"/><stop offset="0.3913" stop-color="#d9ffea"/><stop offset="0.4348" stop-color="#e1ffea"/><stop offset="0.4783" stop-color="#e8ffea"/><stop offset="0.5217" stop-color="#f0ffea"/><stop offset="0.5652" stop-color="#f7ffea"/><stop offset="0.6087" stop-color="#ffffea"/><stop offset="0.6522" stop-color="#fff8e3"/><stop offset="0.6957" stop-color="#fff0dc"/><stop offset="0.7391" stop-color="#ffe9d6"/><stop offset="0.7826" stop-color="#ffe3cf"/><stop offset="0.8261" stop-color="#ffdcca"/><stop offset="0.8696" stop-color="#ffd6c4"/><stop offset="0.9130" stop-color="#ffd1be"/><stop offset="0.9565" stop-color="#ffcbb9"/><stop offset="1.0000" stop-color="#ffc6b4"/></linearGradient>
<linearGradient id="c24"><stop offset="0.0000" stop-color="#9dffed"/><stop offset="0.0435" stop-color="#a3ffed"/><stop offset="0.0870" stop-color="#aaffec"/><stop offset="0.1304" stop-color="#b1ffec"/><stop offset="0.1739" stop-color="#b7ffec"/><stop offset="0.2174" stop-color="#beffec"/><stop offset="0.2609" stop-color="#c5ffec"/><stop offset="0.3043" stop-color="#ccffec"/><stop offset="0.3478" stop-color="#d4ffec"/><stop offset="0.3913" stop-color="#dbffec"/><stop offset="0.4348" stop-color="#e2ffec"/><stop offset="0.4783" stop-color="#eaffec"/><stop offset="0.5217" stop-color="#f1ffeb"/><stop offset="0.5652" stop-color="#f9ffeb"/><stop offset="0.6087" stop-color="#fffeea"/><stop offset="0.6522" stop-color="#fff6e3"/><stop offset="0.6957" stop-color="#ffefdc"/><stop offset="0.7391" stop-color="#ffe8d6"/><stop offset="0.7826" stop-color="#ffe1d0"/><stop offset="0.8261" stop-color="#ffdbca"/><stop offset="0.8696" stop-color="#ffd5c4"/><stop offset="0.9130" stop-color="#ffcfbf"/><stop offset="0.9565" stop-color="#ffcab9"/><stop offset="1.0000" stop-color="#ffc5b5"/></linearGradient>
<linearGradient id="c25"><stop offset="0.0000" stop-color="#9effee"/><stop offset="0.0435" stop-color="#a4ffee"/><stop offset="0.0870" stop-color="#abffee"/><stop offset="0.1304" stop-color="#b2ffee"/><stop offset="0.1739" stop-color="#b9ffee"/><stop offset="0.2174" stop-color="#bfffee"/><stop offset="0.2609" stop-color="#c7ffee"/><stop offset="0.3043" stop-color="#ceffed"/><stop offset="0.3478" stop-color="#d5ffed"/><stop offset="0.3913" stop-color="#dcffed"/><stop offset="0.4348" stop-color="#e3ffed"/><stop offset="0.4783" stop-color="#ebffed"/><stop offset="0.5217" stop-color="#f3ffed"/><stop offset="0.5652" stop-color="#faffed"/><stop offset="0.6087" stop-color="#fffcea"/><stop offset="0.6522" stop-color="#fff5e3"/><stop offset="0.6957" stop-color="#ffeedc"/><stop offset="0.7391" stop-color="#ffe7d6"/><stop offset="0.7826" stop-color="#ffe0d0"/><stop offset="0.8261" stop-color="#ffdaca"/><stop offset="0.8696" stop-color="#ffd4c4"/><stop offset="0.9130" stop-color="#ffcebf"/><stop offset="0.9565" stop-color="#ffc9ba"/><stop offset="1.0000" stop-color="#ffc3b5"/></linearGradient>
<linearGradient id="c26"><stop offset="0.0000" stop-color="#9ffff0"/><stop offset="0.0435" stop-color="#a5ffef"/><stop offset="0.0870" stop-color="#acffef"/><stop offset="0.1304" stop-color="#b3ffef"/><stop offset="0.1739" stop-color="#baffef"/><stop offset="0.2174" stop-color="#c1ffef"/><stop offset="0.2609" stop-color="#c8ffef"/><stop offset="0.3043" stop-color="#cfffef"/><stop offset="0.3478" stop-color="#d6ffef"/><stop offset="0.3913" stop-color="#ddffef"/><stop offset="0.4348" stop-color="#e5ffef"/><stop offset="0.4783" stop-color="#ecffef"/><stop offset="0.5217" stop-color="#f4ffef"/><stop offset="0.5652" stop-color="#fcffee"/><stop offset="0.6087" stop-color="#fffbea"/><stop offset="0.6522" stop-color="#fff3e3"/><stop offset="0.6957" stop-color="#ffecdd"/><stop offset="0.7391" stop-color="#ffe5d6"/><stop offset="0.7826" stop-color="#ffdfd0"/><stop offset="0.8261" stop-color="#ffd9ca"/><stop offset="0.8696" stop-color="#ffd3c5"/><stop offset="0.9130" stop-color="#ffcdbf"/><stop offset="0.9565" stop-color="#ffc8ba"/><stop offset="1.0000" stop-color="#ffc2b5"/></linearGradient>
<linearGradient id="c27"><stop offset="0.0000" stop-color="#a0fff1"/><stop offset="0.0435" stop-color="#a6fff1"/><stop offset="0.0870" stop-color="#adfff1"/><stop offset="0.1304" stop-color="#b4fff1"/><stop offset="0.1739" stop-color="#bbfff1"/><stop offset="0.2174" stop-color="#c2fff1"/><stop offset="0.2609" stop-color="#c9fff1"/><stop offset="0.3043" stop-color="#d0fff0"/><stop offset="0.3478" stop-color="#d7fff0"/><stop offset="0.3913" stop-color="#dffff0"/><stop offset="0.4348" stop-color="#e6fff0"/><stop offset="0.4783" stop-color="#eefff0"/><stop offset="0.5217" stop-color="#f5fff0"/><stop offset="0.5652" stop-color="#fdfff0"/><stop offset="0.6087" stop-color="#fff9ea"/><stop offset="0.6522" stop-color="#fff2e3"/><stop offset="0.6957" stop-color="#ffebdd"/><stop offset="0.7391" stop-color="#ffe4d6"/><stop offset="0.7826" stop-color="#ffded0"/><stop offset="0.8261" stop-color="#ffd7ca"/><stop offset="0.8696" stop-color="#ffd2c5"/><stop offset="0.9130" stop-color="#ffccbf"/><stop offset="0.9565" stop-color="#ffc6ba"/><stop offset="1.0000" stop-color="#ffc1b5"/></linearGradient>
<linearGradient id="c28"><stop offset="0.0000" stop-color="#a1fff2"/><stop offset="0.0435" stop-color="#a8fff2"/><stop offset="0.0870" stop-color="#aefff2"/><stop offset="0.1304" stop-color="#b5fff2"/><stop offset="0.1739" stop-color="#bcfff2"/><stop offset="0.2174" stop-color="#c3fff2"/><stop offset="0.2609" stop-color="#cafff2"/><stop offset="0.3043" stop-color="#d1fff2"/><stop offset="0.3478" stop-color="#d9fff2"/><stop offset="0.3913" stop-color="#e0fff2"/><stop offset="0.4348" stop-color="#e8fff2"/><stop offset="0.4783" stop-color="#effff2"/><stop offset="0.5217" stop-color="#f7fff2"/><stop offset="0.5652" stop-color="#fffff2"/><stop offset="0.6087" stop-color="#fff8eb"/><stop offset="0.6522" stop-color="#fff0e4"/><stop offset="0.6957" stop-color="#ffe9dd"/><stop offset="0.7391" stop-color="#ffe3d6"/><stop offset="0.7826" stop-color="#ffdcd0"/><stop offset="0.8261" stop-color="#ffd6cb"/><stop offset="0.8696" stop-color="#ffd0c5"/><stop offset="0.9130" stop-color="#ffcbc0"/><stop offset="0.9565" stop-color="#ffc5ba"/><stop offset="1.0000" stop-color="#ffc0b5"/></linearGradient>
<linearGradient id="c29"><stop offset="0.0000" stop-color="#a2fff4"/><stop offset="0.0435" stop-color="#a9fff4"/><stop offset="0.0870" stop-color="#affff4"/><stop offset="0.1304" stop-color="#b6fff4"/><stop offset="0.1739" stop-color="#bdfff4"/><stop offset="0.2174" stop-color="#c4fff4"/><stop offset="0.2609" stop-color="#cbfff4"/><stop offset="0.3043" stop-color="#d3fff3"/><stop offset="0.3478" stop-color="#dafff3"/><stop offset="0.3913" stop-color="#e1fff3"/><stop offset="0.4348" stop-color="#e9fff3"/><stop offset="0.4783" stop-color="#f1fff3"/><stop offset="0.5217" stop-color="#f8fff3"/><stop offset="0.5652" stop-color="#fffef2"/><stop offset="0.6087" stop-color="#fff6eb"/><stop offset="0.6522" stop-color="#ffefe4"/><stop offset="0.6957" stop-color="#ffe8dd"/><stop offset="0.7391" stop-color="#ffe1d7"/><stop offset="0.7826" stop-color="#ffdbd1"/><stop offset="0.8261" stop-color="#ffd5cb"/><stop offset="0.8696" stop-color="#ffcfc5"/><stop offset="0.9130" stop-color="#ffcac0"/><stop offset="0.9565" stop-color="#ffc4bb"/><stop offset="1.0000" stop-color="#ffbfb6"/></linearGradient>
<linearGradient id="c30"><stop offset="0.0000" stop-color="#a3fff5"/><stop offset="0.0435" stop-color="#aafff5"/><stop offset="0.0870" stop-color="#b1fff5"/><stop offset="0.1304" stop-color="#b7fff5"/><stop offset="0.1739" stop-color="#befff5"/><stop offset="0.2174" stop-color="#c6fff5"/><stop offset="0.2609" stop-color="#cdfff5"/><stop offset="0.3043" stop-color="#d4fff5"/><stop offset="0.3478" stop-color="#dbfff5"/><stop offset="0.3913" stop-color="#e3fff5"/><stop offset="0.4348" stop-color="#eafff5"/><stop offset="0.4783" stop-color="#f2fff5"/><stop offset="0.5217" stop-color="#fafff5"/><stop offset="0.5652" stop-color="#fffcf2"/><stop offset="0.6087" stop-color="#fff5eb"/><stop offset="0.6522" stop-color="#ffeee4"/><stop offset="0.6957" stop-color="#ffe7dd"/><stop offset="0.7391" stop-color="#ffe0d7"/><stop offset="0.7826" stop-color="#ffdad1"/><stop offset="0.8261" stop-color="#ffd4cb"/><stop offset="0.8696" stop-color="#ffcec5"/><stop offset="0.9130" stop-color="#ffc8c0"/><stop offset="0.9565" stop-color="#ffc3bb"/><stop offset="1.0000" stop-color="#ffbeb6"/></linearGradient>
<linearGradient id="c31"><stop offset="0.0000" stop-color="#a4fff7"/><stop offset="0.0435" stop-color="#abfff7"/><stop offset="0.0870" stop-color="#b2fff7"/><stop offset="0.1304" stop-color="#b9fff7"/><stop offset="0.1739" stop-color="#c0fff7"/><stop offset="0.2174" stop-color="#c7fff7"/><stop offset="0.2609" stop-color="#cefff7"/><stop offset="0.3043" stop-color="#d5fff7"/><stop offset="0.3478" stop-color="#ddfff7"/><stop offset="0.3913" stop-color="#e4fff6"/><stop offset="0.4348" stop-color="#ecfff6"/><stop offset="0.4783" stop-color="#f4fff6"/><stop offset="0.5217" stop-color="#fbfff6"/><stop offset="0.5652" stop-color="#fffbf2"/><stop offset="0.6087" stop-color="#fff3eb"/><stop offset="0.6522" stop-color="#ffece4"/><stop offset="0.6957" stop-color="#ffe5dd"/><stop offset="0.7391" stop-color="#ffdfd7"/><stop offset="0.7826" stop-color="#ffd9d1"/><stop offset="0.8261" stop-color="#ffd3cb"/><stop offset="0.8696" stop-color="#ffcdc6"/><stop offset="0.9130" stop-color="#ffc7c0"/><stop offset="0.9565" stop-color="#ffc2bb"/><stop offset="1.0000" stop-color="#ffbdb6"/></linearGradient>
<linearGradient id="c32"><stop offset="0.0000" stop-color="#a5fff8"/><stop offset="0.0435" stop-color="#acfff8"/><stop offset="0.0870" stop-color="#b3fff8"/><stop offset="0.1304" stop-color="#bafff8"/><stop offset="0.1739" stop-color="#c1fff8"/><stop offset="0.2174" stop-color="#c8fff8"/><stop offset="0.2609" stop-color="#cffff8"/><stop offset="0.3043" stop-color="#d7fff8"/><stop offset="0.3478" stop-color="#defff8"/><stop offset="0.3913" stop-color="#e6fff8"/><stop offset="0.4348" stop-color="#edfff8"/><stop offset="0.4783" stop-color="#f5fff8"/><stop offset="0.5217" stop-color="#fdfff8"/><stop offset="0.5652" stop-color="#fff9f2"/><stop offset="0.6087" stop-color="#fff2eb"/><stop offset="0.6522" stop-color="#ffebe4"/><stop offset="0.6957" stop-color="#ffe4de"/><stop offset="0.7391" stop-color="#ffddd7"/><stop offset="0.7826" stop-color="#ffd7d1"/><stop offset="0.8261" stop-color="#ffd1cb"/><stop offset="0.8696" stop-color="#ffccc6"/><stop offset="0.9130" stop-color="#ffc6c0"/><stop offset="0.9565" stop-color="#ffc1bb"/><stop offset="1.0000" stop-color="#ffbcb6"/></linearGradient>
<linearGradient id="c33"><stop offset="0.0000" stop-color="#a6fffa"/><stop offset="0.0435" stop-color="#adfffa"/><stop offset="0.0870" stop-color="#b4fffa"/><stop offset="0.1304" stop-color="#bbfffa"/><stop offset="0.1739" stop-color="#c2fffa"/><stop offset="0.2174" stop-color="#c9fffa"/><stop offset="0.2609" stop-color="#d1fffa"/><stop offset="0.3043" stop-color="#d8fffa"/><stop offset="0.3478" stop-color="#dffffa"/><stop offset="0.3913" stop-color="#e7fffa"/><stop offset="0.4348" stop-color="#effffa"/><stop offset="0.4783" stop-color="#f6fffa"/><stop offset="0.5217" stop-color="#fefffa"/><stop offset="0.5652" stop-color="#fff8f3"/><stop offset="0.6087" stop-color="#fff0eb"/><stop offset="0.6522" stop-color="#ffe9e4"/><stop offset="0.6957" stop-color="#ffe3de"/><stop offset="0.7391" stop-color="#ffdcd7"/><stop offset="0.7826" stop-color="#ffd6d1"/><stop offset="0.8261" stop-color="#ffd0cc"/><stop offset="0.8696" stop-color="#ffcac6"/><stop offset="0.9130" stop-color="#ffc5c1"/><stop offset="0.9565" stop-color="#ffc0bb"/><stop offset="1.0000" stop-color="#ffbbb7"/></linearGradient>
<linearGradient id="c34"><stop offset="0.0000" stop-color="#a7fffb"/><stop offset="0.0435" stop-color="#aefffb"/><stop offset="0.0870" stop-color="#b5fffb"/><stop offset="0.1304" stop-color="#bcfffb"/><stop offset="0.1739" stop-color="#c3fffb"/><stop offset="0.2174" stop-color="#cbfffb"/><stop offset="0.2609" stop-color="#d2fffb"/><stop offset="0.3043" stop-color="#d9fffb"/><stop offset="0.3478" stop-color="#e1fffb"/><stop offset="0.3913" stop-color="#e8fffb"/><stop offset="0.4348" stop-color="#f0fffb"/><stop offset="0.4783" stop-color="#f8fffb"/><stop offset="0.5217" stop-color="#fffefa"/><stop offset="0.5652" stop-color="#fff6f3"/><stop offset="0.6087" stop-color="#ffefeb"/><stop offset="0.6522" stop-color="#ffe8e5"/><stop offset="0.6957" stop-color="#ffe1de"/><stop offset="0.7391" stop-color="#ffdbd8"/><stop offset="0.7826" stop-color="#ffd5d2"/><stop offset="0.8261" stop-color="#ffcfcc"/><stop offset="0.8696" stop-color="#ffc9c6"/><stop offset="0.9130" stop-color="#ffc4c1"/><stop offset="0.9565" stop-color="#ffbfbc"/><stop offset="1.0000" stop-color="#ffbab7"/></linearGradient>
<linearGradient id="c35"><stop offset="0.0000" stop-color="#a8fffd"/><stop offset="0.0435" stop-color="#affffd"/><stop offset="0.0870" stop-color="#b6fffd"/><stop offset="0.1304" stop-color="#bdfffd"/><stop offset="0.1739" stop-color="#c5fffd"/><stop offset="0.2174" stop-color="#ccfffd"/><stop offset="0.2609" stop-color="#d3fffd"/><stop offset="0.3043" stop-color="#dbfffd"/><stop offset="0.3478" stop-color="#e2fffd"/><stop offset="0.3913" stop-color="#eafffd"/><stop offset="0.4348" stop-color="#f2fffd"/><stop offset="0.4783" stop-color="#f9fffd"/><stop offset="0.5217" stop-color="#fffdfa"/><stop offset="0.5652" stop-color="#fff5f3"/><stop offset="0.6087" stop-color="#ffeeec"/><stop offset="0.6522" stop-color="#ffe7e5"/><stop offset="0.6957" stop-color="#ffe0de"/><stop offset="0.7391" stop-color="#ffdad8"/><stop offset="0.7826" stop-color="#ffd3d2"/><stop offset="0.8261" stop-color="#ffcecc"/><stop offset="0.8696" stop-color="#ffc8c6"/><stop offset="0.9130" stop-color="#ffc3c1"/><stop offset="0.9565" stop-color="#ffbdbc"/><stop offset="1.0000" stop-color="#ffb8b7"/></linearGradient>
<linearGradient id="c36"><stop offset="0.0000" stop-color="#aafffe"/><stop offset="0.0435" stop-color="#b1fffe"/><stop offset="0.0870" stop-color="#b8fffe"/><stop offset="0.1304" stop-color="#bffffe"/><stop offset="0.1739" stop-color="#c6fffe"/><stop offset="0.2174" stop-color="#cdfffe"/><stop offset="0.2609" stop-color="#d5fffe"/><stop offset="0.3043" stop-color="#dcfffe"/><stop offset="0.3478" stop-color="#e4fffe"/><stop offset="0.3913" stop-color="#ebfffe"/><stop offset="0.4348" stop-color="#f3fffe"/><stop offset="0.4783" stop-color="#fbfffe"/><stop offset="0.5217" stop-color="#fffbfb"/><stop offset="0.5652" stop-color="#fff3f3"/><stop offset="0.6087" stop-color="#ffecec"/><stop offset="0.6522" stop-color="#ffe5e5"/><stop offset="0.6957" stop-color="#ffdfde"/><stop offset="0.7391" stop-color="#ffd8d8"/><stop offset="0.7826" stop-color="#ffd2d2"/><stop offset="0.8261" stop-color="#ffcccc"/><stop offset="0.8696" stop-color="#ffc7c7"/><stop offset="0.9130" stop-color="#ffc1c1"/><stop offset="0.9565" stop-color="#ffbcbc"/><stop offset="1.0000" stop-color="#ffb7b7"/></linearGradient>
<linearGradient id="c37"><stop offset="0.0000" stop-color="#aafeff"/><stop offset="0.0435" stop-color="#b1feff"/><stop offset="0.0870" stop-color="#b8feff"/><stop offset="0.1304" stop-color="#bffeff"/><stop offset="0.1739" stop-color="#c6feff"/><stop offset="0.2174" stop-color="#cefeff"/><stop offset="0.2609" stop-color="#d5feff"/><stop offset="0.3043" stop-color="#dcfeff"/><stop offset="0.3478" stop-color="#e4feff"/><stop offset="0.3913" stop-color="#ecfeff"/><stop offset="0.4348" stop-color="#f3feff"/><stop offset="0.4783" stop-color="#fbfeff"/><stop offset="0.5217" stop-color="#fffafb"/><stop offset="0.5652" stop-color="#fff2f3"/><stop offset="0.6087" stop-color="#ffebec"/><stop offset="0.6522" stop-color="#ffe4e5"/><stop offset="0.6957" stop-color="#ffddde"/><stop offset="0.7391" stop-color="#ffd7d8"/><stop offset="0.7826" stop-color="#ffd1d2"/><stop offset="0.8261" stop-color="#ffcbcc"/><stop offset="0.8696" stop-color="#ffc6c7"/><stop offset="0.9130" stop-color="#ffc0c1"/><stop offset="0.9565" stop-color="#ffbbbc"/><stop offset="1.0000" stop-color="#ffb6b7"/></linearGradient>
<linearGradient id="c38"><stop offset="0.0000" stop-color="#aafdff"/><stop offset="0.0435" stop-color="#b1fdff"/><stop offset="0.0870" stop-color="#b8fcff"/><stop offset="0.1304" stop-color="#bffcff"/><stop offset="0.1739" stop-color="#c6fcff"/><stop offset="0.2174" stop-color="#cefcff"/><stop offset="0.2609" stop-color="#d5fcff"/><stop offset="0.3043" stop-color="#dcfcff"/><stop offset="0.3478" stop-color="#e4fcff"/><stop offset="0.3913" stop-color="#ecfcff"/><stop offset="0.4348" stop-color="#f3fcff"/><stop offset="0.4783" stop-color="#fbfcff"/><stop offset="0.5217" stop-color="#fff8fb"/><stop offset="0.5652" stop-color="#fff1f3"/><stop offset="0.6087" stop-color="#ffe9ec"/><stop offset="0.6522" stop-color="#ffe3e5"/><stop offset="0.6957" stop-color="#ffdcdf"/><stop offset="0.7391" stop-color="#ffd6d8"/><stop offset="0.7826" stop-color="#ffd0d2"/><stop offset="0.8261" stop-color="#ffcacc"/><stop offset="0.8696" stop-color="#ffc5c7"/><stop offset="0.9130" stop-color="#ffbfc2"/><stop offset="0.9565" stop-color="#ffbabd"/><stop offset="1.0000" stop-color="#ffb5b8"/></linearGradient>
<linearGradient id="c39"><stop offset="0.0000" stop-color="#aafbff"/><stop offset="0.0435" stop-color="#b1fbff"/><stop offset="0.0870" stop-color="#b8fbff"/><stop offset="0.1304" stop-color="#bffbff"/><stop offset="0.1739" stop-color="#c6fbff"/><stop offset="0.2174" stop-color="#cefbff"/><stop offset="0.2609" stop-color="#d5fbff"/><stop offset="0.3043" stop-color="#dcfbff"/><stop offset="0.3478" stop-color="#e4fbff"/><stop offset="0.3913" stop-color="#ecfbff"/><stop offset="0.4348" stop-color="#f3fbff"/><stop offset="0.4783" stop-color="#fbfbff"/><stop offset="0.5217" stop-color="#fff7fb"/><stop offset="0.5652" stop-color="#ffeff3"/><stop offset="0.6087" stop-color="#ffe8ec"/><stop offset="0.6522" stop-color="#ffe1e5"/><stop offset="0.6957" stop-color="#ffdbdf"/><stop offset="0.7391" stop-color="#ffd4d8"/><stop offset="0.7826" stop-color="#ffcfd2"/><stop offset="0.8261" stop-color="#ffc9cd"/><stop offset="0.8696" stop-color="#ffc3c7"/><stop offset="0.9130" stop-color="#ffbec2"/><stop offset="0.9565" stop-color="#ffb9bd"/><stop offset="1.0000" stop-color="#ffb4b8"/></linearGradient>
<linearGradient id="c40"><stop offset="0.0000" stop-color="#aafaff"/><stop offset="0.0435" stop-color="#b1f9ff"/><stop offset="0.0870" stop-color="#b8f9ff"/><stop offset="0.1304" stop-color="#bff9ff"/><stop offset="0.1739" stop-color="#c6f9ff"/><stop offset="0.2174" stop-color="#cef9ff"/><stop offset="0.2609" stop-color="#d5f9ff"/><stop offset="0.3043" stop-color="#dcf9ff"/><stop offset="0.3478" stop-color="#e4f9ff"/><stop offset="0.3913" stop-color="#ecf9ff"/><stop offset="0.4348" stop-color="#f3f9ff"/><stop offset="0.4783" stop-color="#fbf9ff"/><stop offset="0.5217" stop-color="#fff5fb"/><stop offset="0.5652" stop-color="#ffeef4"/><stop offset="0.6087" stop-color="#ffe7ec"/><stop offset="0.6522" stop-color="#ffe0e6"/><stop offset="0.6957" stop-color="#ffd9df"/><stop offset="0.7391" stop-color="#ffd3d9"/><stop offset="0.7826" stop-color="#ffcdd3"/><stop offset="0.8261" stop-color="#ffc8cd"/><stop offset="0.8696" stop-color="#ffc2c7"/><stop offset="0.9130" stop-color="#ffbdc2"/><stop offset="0.9565" stop-color="#ffb8bd"/><stop offset="1.0000" stop-color="#ffb3b8"/></linearGradient>
<linearGradient id="c41"><stop offset="0.0000" stop-color="#aaf8ff"/><stop offset="0.0435" stop-color="#b1f8ff"/><stop offset="0.0870" stop-color="#b8f8ff"/><stop offset="0.1304" stop-color="#bff8ff"/><stop offset="0.1739" stop-color="#c6f8ff"/><stop offset="0.2174" stop-color="#cef8ff"/><stop offset="0.2609" stop-color="#d5f8ff"/><stop offset="0.3043" stop-color="#dcf8ff"/><stop offset="0.3478" stop-color="#e4f8ff"/><stop offset="0.3913" stop-color="#ebf7ff"/><stop offset="0.4348" stop-color="#f3f7ff"/><stop offset="0.4783" stop-color="#fbf7ff"/><stop offset="0.5217" stop-color="#fff4fb"/><stop offset="0.5652" stop-color="#ffecf4"/><stop offset="0.6087" stop-color="#ffe5ed"/><stop offset="0.6522" stop-color="#ffdfe6"/><stop offset="0.6957" stop-color="#ffd8df"/><stop offset="0.7391" stop-color="#ffd2d9"/><stop offset="0.7826" stop-color="#ffccd3"/><stop offset="0.8261" stop-color="#ffc6cd"/><stop offset="0.8696" stop-color="#ffc1c8"/><stop offset="0.9130" stop-color="#ffbcc2"/><stop offset="0.9565" stop-color="#ffb7bd"/><stop offset="1.0000" stop-color="#ffb2b8"/></linearGradient>
<linearGradient id="c42"><stop offset="0.0000" stop-color="#abf6ff"/><stop offset="0.0435" stop-color="#b1f6ff"/><stop offset="0.0870" stop-color="#b8f6ff"/><stop offset="0.1304" stop-color="#bff6ff"/><stop offset="0.1739" stop-color="#c6f6ff"/><stop offset="0.2174" stop-color="#cef6ff"/><stop offset="0.2609" stop-color="#d5f6ff"/><stop offset="0.3043" stop-color="#dcf6ff"/><stop offset="0.3478" stop-color="#e4f6ff"/><stop offset="0.3913" stop-color="#ebf6ff"/><stop offset="0.4348" stop-color="#f3f6ff"/><stop offset="0.4783" stop-color="#fbf6ff"/><stop offset="0.5217" stop-color="#fff2fb"/><stop offset="0.5652" stop-color="#ffebf4"/><stop offset="0.6087" stop-color="#ffe4ed"/><stop offset="0.6522" stop-color="#ffdde6"/><stop offset="0.6957" stop-color="#ffd7df"/><stop offset="0.7391" stop-color="#ffd1d9"/><stop offset="0.7826" stop-color="#ffcbd3"/><stop offset="0.8261" stop-color="#ffc5cd"/><stop offset="0.8696" stop-color="#ffc0c8"/><stop offset="0.9130" stop-color="#ffbbc2"/><stop offset="0.9565" stop-color="#ffb6bd"/><stop offset="1.0000" stop-color="#ffb1b8"/></linearGradient>
<linearGradient id="c43"><stop offset="0.0000" stop-color="#abf5ff"/><stop offset="0.0435" stop-color="#b1f5ff"/><stop offset="0.0870" stop-color="#b8f5ff"/><stop offset="0.1304" stop-color="#bff5ff"/><stop offset="0.1739" stop-color="#c7f5ff"/><stop offset="0.2174" stop-color="#cef5ff"/><stop offset="0.2609" stop-color="#d5f5ff"/><stop offset="0.3043" stop-color="#dcf4ff"/><stop offset="0.3478" stop-color="#e4f4ff"/><stop offset="0.3913" stop-color="#ebf4ff"/><stop offset="0.4348" stop-color="#f3f4ff"/><stop offset="0.4783" stop-color="#fbf4ff"/><stop offset="0.5217" stop-color="#fff1fb"/><stop offset="0.5652" stop-color="#ffe9f4"/><stop offset="0.6087" stop-color="#ffe2ed"/><stop offset="0.6522" stop-color="#ffdce6"/><stop offset="0.6957" stop-color="#ffd6df"/><stop offset="0.7391" stop-color="#ffcfd9"/><stop offset="0.7826" stop-color="#ffcad3"/><stop offset="0.8261" stop-color="#ffc4cd"/><stop offset="0.8696" stop-color="#ffbfc8"/><stop offset="0.9130" stop-color="#ffbac3"/><stop offset="0.9565" stop-color="#ffb5be"/><stop offset="1.0000" stop-color="#ffb0b9"/></linearGradient>
<linearGradient id="c44"><stop offset="0.0000" stop-color="#abf3ff"/><stop offset="0.0435" stop-color="#b2f3ff"/><stop offset="0.0870" stop-color="#b8f3ff"/><stop offset="0.1304" stop-color="#bff3ff"/><stop offset="0.1739" stop-color="#c7f3ff"/><stop offset="0.2174" stop-color="#cef3ff"/><stop offset="0.2609" stop-color="#d5f3ff"/><stop offset="0.3043" stop-color="#dcf3ff"/><stop offset="0.3478" stop-color="#e4f3ff"/><stop offset="0.3913" stop-color="#ebf3ff"/><stop offset="0.4348" stop-color="#f3f3ff"/><stop offset="0.4783" stop-color="#fbf3ff"/><stop offset="0.5217" stop-color="#ffeffc"/><stop offset="0.5652" stop-color="#ffe8f4"/><stop offset="0.6087" stop-color="#ffe1ed"/><stop offset="0.6522" stop-color="#ffdbe6"/><stop offset="0.6957" stop-color="#ffd4e0"/><stop offset="0.7391" stop-color="#ffced9"/><stop offset="0.7826" stop-color="#ffc8d3"/><stop offset="0.8261" stop-color="#ffc3ce"/><stop offset="0.8696" stop-color="#ffbec8"/><stop offset="0.9130" stop-color="#ffb9c3"/><stop offset="0.9565" stop-color="#ffb4be"/><stop offset="1.0000" stop-color="#ffafb9"/></linearGradient>
<linearGradient id="c45"><stop offset="0.0000" stop-color="#abf2ff"/><stop offset="0.0435" stop-color="#b2f2ff"/><stop offset="0.0870" stop-color="#b9f2ff"/><stop offset="0.1304" stop-color="#c0f2ff"/><stop offset="0.1739" stop-color="#c7f2ff"/><stop offset="0.2174" stop-color="#cef2ff"/><stop offset="0.2609" stop-color="#d5f1ff"/><stop offset="0.3043" stop-color="#dcf1ff"/><stop offset="0.3478" stop-color="#e4f1ff"/><stop offset="0.3913" stop-color="#ebf1ff"/><stop offset="0.4348" stop-color="#f3f1ff"/><stop offset="0.4783" stop-color="#fbf1ff"/><stop offset="0.5217" stop-color="#ffeefc"/><stop offset="0.5652" stop-color="#ffe7f4"/><stop offset="0.6087" stop-color="#ffe0ed"/><stop offset="0.6522" stop-color="#ffd9e6"/><stop offset="0.6957" stop-color="#ffd3e0"/><stop offset="0.7391" stop-color="#ffcdda"/><stop offset="0.7826" stop-color="#ffc7d4"/><stop offset="0.8261" stop-color="#ffc2ce"/><stop offset="0.8696" stop-color="#ffbcc8"/><stop offset="0.9130" stop-color="#ffb7c3"/><stop offset="0.9565" stop-color="#ffb3be"/><stop offset="1.0000" stop-color="#ffaeb9"/></linearGradient>
<linearGradient id="c46"><stop offset="0.0000" stop-color="#abf1ff"/><stop offset="0.0435" stop-color="#b2f0ff"/><stop offset="0.0870" stop-color="#b9f0ff"/><stop offset="0.1304" stop-color="#c0f0ff"/><stop offset="0.1739" stop-color="#c7f0ff"/><stop offset="0.2174" stop-color="#cef0ff"/><stop offset="0.2609" stop-color="#d5f0ff"/><stop offset="0.3043" stop-color="#dcf0ff"/><stop offset="0.3478" stop-color="#e4f0ff"/><stop offset="0.3913" stop-color="#ebf0ff"/><stop offset="0.4348" stop-color="#f3efff"/><stop offset="0.4783" stop-color="#faefff"/><stop offset="0.5217" stop-color="#ffecfc"/><stop offset="0.5652" stop-color="#ffe5f4"/><stop offset="0.6087" stop-color="#ffdeed"/><stop offset="0.6522" stop-color="#ffd8e6"/><stop offset="0.6957" stop-color="#ffd2e0"/><stop offset="0.7391" stop-color="#ffccda"/><stop offset="0.7826" stop-color="#ffc6d4"/><stop offset="0.8261" stop-color="#ffc1ce"/><stop offset="0.8696" stop-color="#ffbbc9"/><stop offset="0.9130" stop-color="#ffb6c3"/><stop offset="0.9565" stop-color="#ffb1be"/><stop offset="1.0000" stop-color="#ffadb9"/></linearGradient>
<linearGradient id="c47"><stop offset="0.0000" stop-color="#abefff"/><stop offset="0.0435" stop-color="#b2efff"/><stop offset="0.0870" stop-color="#b9efff"/><stop offset="0.1304" stop-color="#c0efff"/><stop offset="0.1739" stop-color="#c7efff"/><stop offset="0.2174" stop-color="#ceefff"/><stop offset="0.2609" stop-color="#d5eeff"/><stop offset="0.3043" stop-color="#dceeff"/><stop offset="0.3478" stop-color="#e4eeff"/><stop offset="0.3913" stop-color="#ebeeff"/><stop offset="0.4348" stop-color="#f3eeff"/><stop offset="0.4783" stop-color="#faeeff"/><stop offset="0.5217" stop-color="#ffebfc"/><stop offset="0.5652" stop-color="#ffe4f5"/><stop offset="0.6087" stop-color="#ffdded"/><stop offset="0.6522" stop-color="#ffd7e7"/><stop offset="0.6957" stop-color="#ffd0e0"/><stop offset="0.7391" stop-color="#ffcbda"/><stop offset="0.7826" stop-color="#ffc5d4"/><stop offset="0.8261" stop-color="#ffbfce"/><stop offset="0.8696" stop-color="#ffbac9"/><stop offset="0.9130" stop-color="#ffb5c3"/><stop offset="0.9565" stop-color="#ffb0be"/><stop offset="1.0000" stop-color="#ffacb9"/></linearGradient>
<linearGradient id="c48"><stop offset="0.0000" stop-color="#abeeff"/><stop offset="0.0435" stop-color="#b2edff"/><stop offset="0.0870" stop-color="#b9edff"/><stop offset="0.1304" stop-color="#c0edff"/><stop offset="0.1739" stop-color="#c7edff"/><stop offset="0.2174" stop-color="#ceedff"/><stop offset="0.2609" stop-color="#d5edff"/><stop offset="0.3043" stop-color="#dcedff"/><stop offset="0.3478" stop-color="#e4edff"/><stop offset="0.3913" stop-color="#ebecff"/><stop offset="0.4348" stop-color="#f3ecff"/><stop offset="0.4783" stop-color="#faecff"/><stop offset="0.5217" stop-color="#ffe9fc"/><stop offset="0.5652" stop-color="#ffe2f5"/><stop offset="0.6087" stop-color="#ffdcee"/><stop offset="0.6522" stop-color="#ffd5e7"/><stop offset="0.6957" stop-color="#ffcfe0"/><stop offset="0.7391" stop-color="#ffc9da"/><stop offset="0.7826" stop-color="#ffc4d4"/><stop offset="0.8261" stop-color="#ffbece"/><stop offset="0.8696" stop-color="#ffb9c9"/><stop offset="0.9130" stop-color="#ffb4c4"/><stop offset="0.9565" stop-color="#ffafbf"/><stop offset="1.0000" stop-color="#ffabba"/></linearGradient>
<linearGradient id="c49"><stop offset="0.0000" stop-color="#abecff"/><stop offset="0.0435" stop-color="#b2ecff"/><stop offset="0.0870" stop-color="#b9ecff"/><stop offset="0.1304" stop-color="#c0ecff"/><stop offset="0.1739" stop-color="#c7ecff"/><stop offset="0.2174" stop-color="#ceecff"/><stop offset="0.2609" stop-color="#d5ebff"/><stop offset="0.3043" stop-color="#dcebff"/><stop offset="0.3478" stop-color="#e4ebff"/><stop offset="0.3913" stop-color="#ebebff"/><stop offset="0.4348" stop-color="#f2ebff"/><stop offset="0.4783" stop-color="#faebff"/><stop offset="0.5217" stop-color="#ffe8fc"/><stop offset="0.5652" stop-color="#ffe1f5"/><stop offset="0.6087" stop-color="#ffdaee"/><stop offset="0.6522" stop-color="#ffd4e7"/><stop offset="0.6957" stop-color="#ffcee0"/><stop offset="0.7391" stop-color="#ffc8da"/><stop offset="0.7826" stop-color="#ffc2d4"/><stop offset="0.8261" stop-color="#ffbdcf"/><stop offset="0.8696" stop-color="#ffb8c9"/><stop offset="0.9130" stop-color="#ffb3c4"/><stop offset="0.9565" stop-color="#ffaebf"/><stop offset="1.0000" stop-color="#ffaaba"/></linearGradient>
<linearGradient id="c50"><stop offset="0.0000" stop-color="#abebff"/><stop offset="0.0435" stop-color="#b2ebff"/><stop offset="0.0870" stop-color="#b9eaff"/><stop offset="0.1304" stop-color="#c0eaff"/><stop offset="0.1739" stop-color="#c7eaff"/><stop offset="0.2174" stop-color="#ceeaff"/><stop offset="0.2609" stop-color="#d5eaff"/><stop offset="0.3043" stop-color="#dceaff"/><stop offset="0.3478" stop-color="#e3eaff"/><stop offset="0.3913" stop-color="#ebe9ff"/><stop offset="0.4348" stop-color="#f2e9ff"/><stop offset="0.4783" stop-color="#fae9ff"/><stop offset="0.5217" stop-color="#ffe7fc"/><stop offset="0.5652" stop-color="#ffe0f5"/><stop offset="0.6087" stop-color="#ffd9ee"/><stop offset="0.6522" stop-color="#ffd3e7"/><stop offset="0.6957" stop-color="#ffcde1"/><stop offset="0.7391" stop-color="#ffc7da"/><stop offset="0.7826" stop-color="#ffc1d4"/><stop offset="0.8261" stop-color="#ffbccf"/><stop offset="0.8696" stop-color="#ffb7c9"/><stop offset="0.9130" stop-color="#ffb2c4"/><stop offset="0.9565" stop-color="#ffadbf"/><stop offset="1.0000" stop-color="#ffa9ba"/></linearGradient>
<linearGradient id="c51"><stop offset="0.0000" stop-color="#abe9ff"/><stop offset="0.0435" stop-color="#b2e9ff"/><stop offset="0.0870" stop-color="#b9e9ff"/><stop offset="0.1304" stop-color="#c0e9ff"/><stop offset="0.1739" stop-color="#c7e9ff"/><stop offset="0.2174" stop-color="#cee9ff"/><stop offset="0.2609" stop-color="#d5e8ff"/><stop offset="0.3043" stop-color="#dce8ff"/><stop offset="0.3478" stop-color="#e3e8ff"/><stop offset="0.3913" stop-color="#ebe8ff"/><stop offset="0.4348" stop-color="#f2e8ff"/><stop offset="0.4783" stop-color="#fae8ff"/><stop offset="0.5217" stop-color="#ffe5fc"/><stop offset="0.5652" stop-color="#ffdef5"/><stop offset="0.6087" stop-color="#ffd8ee"/><stop offset="0.6522" stop-color="#ffd1e7"/><stop offset="0.6957" stop-color="#ffcbe1"/><stop offset="0.7391" stop-color="#ffc6db"/><stop offset="0.7826" stop-color="#ffc0d5"/><stop offset="0.8261" stop-color="#ffbbcf"/><stop offset="0.8696" stop-color="#ffb6c9"/><stop offset="0.9130" stop-color="#ffb1c4"/><stop offset="0.9565" stop-color="#ffacbf"/><stop offset="1.0000" stop-color="#ffa8ba"/></linearGradient>
<linearGradient id="c52"><stop offset="0.0000" stop-color="#abe8ff"/><stop offset="0.0435" stop-color="#b2e8ff"/><stop offset="0.0870" stop-color="#b9e8ff"/><stop offset="0.1304" stop-color="#c0e7ff"/><stop offset="0.1739" stop-color="#c7e7ff"/><stop offset="0.2174" stop-color="#cee7ff"/><stop offset="0.2609" stop-color="#d5e7ff"/><stop offset="0.3043" stop-color="#dce7ff"/><stop offset="0.3478" stop-color="#e3e7ff"/><stop offset="0.3913" stop-color="#ebe6ff"/><stop offset="0.4348" stop-color="#f2e6ff"/><stop offset="0.4783" stop-color="#fae6ff"/><stop offset="0.5217" stop-color="#ffe4fd"/><stop offset="0.5652" stop-color="#ffddf5"/><stop offset="0.6087" stop-color="#ffd6ee"/><stop offset="0.6522" stop-color="#ffd0e7"/><stop offset="0.6957" stop-color="#ffcae1"/><stop offset="0.7391" stop-color="#ffc4db"/><stop offset="0.7826" stop-color="#ffbfd5"/><stop offset="0.8261" stop-color="#ffbacf"/><stop offset="0.8696" stop-color="#ffb5ca"/><stop offset="0.9130" stop-color="#ffb0c4"/><stop offset="0.9565" stop-color="#ffabbf"/><stop offset="1.0000" stop-color="#ffa7bb"/></linearGradient>
<linearGradient id="c53"><stop offset="0.0000" stop-color="#ace6ff"/><stop offset="0.0435" stop-color="#b2e6ff"/><stop offset="0.0870" stop-color="#b9e6ff"/><stop offset="0.1304" stop-color="#c0e6ff"/><stop offset="0.1739" stop-color="#c7e6ff"/><stop offset="0.2174" stop-color="#cee6ff"/><stop offset="0.2609" stop-color="#d5e5ff"/><stop offset="0.3043" stop-color="#dce5ff"/><stop offset="0.3478" stop-color="#e3e5ff"/><stop offset="0.3913" stop-color="#ebe5ff"/><stop offset="0.4348" stop-color="#f2e5ff"/><stop offset="0.4783" stop-color="#fae5ff"/><stop offset="0.5217" stop-color="#ffe2fd"/><stop offset="0.5652" stop-color="#ffdbf5"/><stop offset="0.6087" stop-color="#ffd5ee"/><stop offset="0.6522" stop-color="#ffcfe8"/><stop offset="0.6957" stop-color="#ffc9e1"/><stop offset="0.7391" stop-color="#ffc3db"/><stop offset="0.7826" stop-color="#ffbed5"/><stop offset="0.8261" stop-color="#ffb9cf"/><stop offset="0.8696" stop-color="#ffb4ca"/><stop offset="0.9130" stop-color="#ffafc5"/><stop offset="0.9565" stop-color="#ffaac0"/><stop offset="1.0000" stop-color="#ffa6bb"/></linearGradient>
<linearGradient id="c54"><stop offset="0.0000" stop-color="#ace5ff"/><stop offset="0.0435" stop-color="#b2e5ff"/><stop offset="0.0870" stop-color="#b9e5ff"/><stop offset="0.1304" stop-color="#c0e4ff"/><stop offset="0.1739" stop-color="#c7e4ff"/><stop offset="0.2174" stop-color="#cee4ff"/><stop offset="0.2609" stop-color="#d5e4ff"/><stop offset="0.3043" stop-color="#dce4ff"/><stop offset="0.3478" stop-color="#e3e4ff"/><stop offset="0.3913" stop-color="#ebe3ff"/><stop offset="0.4348" stop-color="#f2e3ff"/><stop offset="0.4783" stop-color="#fae3ff"/><stop offset="0.5217" stop-color="#ffe1fd"/><stop offset="0.5652" stop-color="#ffdaf5"/><stop offset="0.6087" stop-color="#ffd4ee"/><stop offset="0.6522" stop-color="#ffcee8"/><stop offset="0.6957" stop-color="#ffc8e1"/><stop offset="0.7391" stop-color="#ffc2db"/><stop offset="0.7826" stop-color="#ffbdd5"/><stop offset="0.8261" stop-color="#ffb7cf"/><stop offset="0.8696" stop-color="#ffb2ca"/><stop offset="0.9130" stop-color="#ffaec5"/><stop offset="0.9565" stop-color="#ffa9c0"/><stop offset="1.0000" stop-color="#ffa5bb"/></linearGradient>
<linearGradient id="c55"><stop offset="0.0000" stop-color="#ace4ff"/><stop offset="0.0435" stop-color="#b2e3ff"/><stop offset="0.0870" stop-color="#b9e3ff"/><stop offset="0.1304" stop-color="#c0e3ff"/><stop offset="0.1739" stop-color="#c7e3ff"/><stop offset="0.2174" stop-color="#cee3ff"/><stop offset="0.2609" stop-color="#d5e2ff"/><stop offset="0.3043" stop-color="#dce2ff"/><stop offset="0.3478" stop-color="#e3e2ff"/><stop offset="0.3913" stop-color="#ebe2ff"/><stop offset="0.4348" stop-color="#f2e2ff"/><stop offset="0.4783" stop-color="#f9e2ff"/><stop offset="0.5217" stop-color="#ffdffd"/><stop offset="0.5652" stop-color="#ffd9f6"/><stop offset="0.6087" stop-color="#ffd2ef"/><stop offset="0.6522" stop-color="#ffcce8"/><stop offset="0.6957" stop-color="#ffc6e1"/><stop offset="0.7391" stop-color="#ffc1db"/><stop offset="0.7826" stop-color="#ffbbd5"/><stop offset="0.8261" stop-color="#ffb6d0"/><stop offset="0.8696" stop-color="#ffb1ca"/><stop offset="0.9130" stop-color="#ffadc5"/><stop offset="0.9565" stop-color="#ffa8c0"/><stop offset="1.0000" stop-color="#ffa4bb"/></linearGradient>
<linearGradient id="c56"><stop offset="0.0000" stop-color="#ace2ff"/><stop offset="0.0435" stop-color="#b2e2ff"/><stop offset="0.0870" stop-color="#b9e2ff"/><stop offset="0.1304" stop-color="#c0e2ff"/><stop offset="0.1739" stop-color="#c7e1ff"/><stop offset="0.2174" stop-color="#cee1ff"/><stop offset="0.2609" stop-color="#d5e1ff"/><stop offset="0.3043" stop-color="#dce1ff"/><stop offset="0.3478" stop-color="#e3e1ff"/><stop offset="0.3913" stop-color="#ebe0ff"/><stop offset="0.4348" stop-color="#f2e0ff"/><stop offset="0.4783" stop-color="#f9e0ff"/><stop offset="0.5217" stop-color="#ffdefd"/><stop offset="0.5652" stop-color="#ffd7f6"/><stop offset="0.6087" stop-color="#ffd1ef"/><stop offset="0.6522" stop-color="#ffcbe8"/><stop offset="0.6957" stop-color="#ffc5e2"/><stop offset="0.7391" stop-color="#ffc0db"/><stop offset="0.7826" stop-color="#ffbad6"/><stop offset="0.8261" stop-color="#ffb5d0"/><stop offset="0.8696" stop-color="#ffb0ca"/><stop offset="0.9130" stop-color="#ffabc5"/><stop offset="0.9565" stop-color="#ffa7c0"/><stop offset="1.0000" stop-color="#ffa3bb"/></linearGradient>
<linearGradient id="c57"><stop offset="0.0000" stop-color="#ace1ff"/><stop offset="0.0435" stop-color="#b3e1ff"/><stop offset="0.0870" stop-color="#b9e0ff"/><stop offset="0.1304" stop-color="#c0e0ff"/><stop offset="0.1739" stop-color="#c7e0ff"/><stop offset="0.2174" stop-color="#cee0ff"/><stop offset="0.2609" stop-color="#d5e0ff"/><stop offset="0.3043" stop-color="#dcdfff"/><stop offset="0.3478" stop-color="#e3dfff"/><stop offset="0.3913" stop-color="#eadfff"/><stop offset="0.4348" stop-color="#f2dfff"/><stop offset="0.4783" stop-color="#f9dfff"/><stop offset="0.5217" stop-color="#ffddfd"/><stop offset="0.5652" stop-color="#ffd6f6"/><stop offset="0.6087" stop-color="#ffd0ef"/><stop offset="0.6522" stop-color="#ffcae8"/><stop offset="0.6957" stop-color="#ffc4e2"/><stop offset="0.7391" stop-color="#ffbedc"/><stop offset="0.7826" stop-color="#ffb9d6"/><stop offset="0.8261" stop-color="#ffb4d0"/><stop offset="0.8696" stop-color="#ffafcb"/><stop offset="0.9130" stop-color="#ffaac5"/><stop offset="0.9565" stop-color="#ffa6c0"/><stop offset="1.0000" stop-color="#ffa2bc"/></linearGradient>
<linearGradient id="c58"><stop offset="0.0000" stop-color="#acdfff"/><stop offset="0.0435" stop-color="#b3dfff"/><stop offset="0.0870" stop-color="#b9dfff"/><stop offset="0.1304" stop-color="#c0dfff"/><stop offset="0.1739" stop-color="#c7dfff"/><stop offset="0.2174" stop-color="#cedeff"/><stop offset="0.2609" stop-color="#d5deff"/><stop offset="0.3043" stop-color="#dcdeff"/><stop offset="0.3478" stop-color="#e3deff"/><stop offset="0.3913" stop-color="#eaddff"/><stop offset="0.4348" stop-color="#f2ddff"/><stop offset="0.4783" stop-color="#f9ddff"/><stop offset="0.5217" stop-color="#ffdbfd"/><stop offset="0.5652" stop-color="#ffd5f6"/><stop offset="0.6087" stop-color="#ffceef"/><stop offset="0.6522" stop-color="#ffc8e8"/><stop offset="0.6957" stop-color="#ffc3e2"/><stop offset="0.7391" stop-color="#ffbddc"/><stop offset="0.7826" stop-color="#ffb8d6"/><stop offset="0.8261" stop-color="#ffb3d0"/><stop offset="0.8696" stop-color="#ffaecb"/><stop offset="0.9130" stop-color="#ffa9c6"/><stop offset="0.9565" stop-color="#ffa5c1"/><stop offset="1.0000" stop-color="#ffa1bc"/></linearGradient>
<linearGradient id="c59"><stop offset="0.0000" stop-color="#acdeff"/><stop offset="0.0435" stop-color="#b3deff"/><stop offset="0.0870" stop-color="#b9deff"/><stop offset="0.1304" stop-color="#c0ddff"/><stop offset="0.1739" stop-color="#c7ddff"/><stop offset="0.2174" stop-color="#ceddff"/><stop offset="0.2609" stop-color="#d5ddff"/><stop offset="0.3043" stop-color="#dcdcff"/><stop offset="0.3478" stop-color="#e3dcff"/><stop offset="0.3913" stop-color="#eadcff"/><stop offset="0.4348" stop-color="#f2dcff"/><stop offset="0.4783" stop-color="#f9dcff"/><stop offset="0.5217" stop-color="#ffdafd"/><stop offset="0.5652" stop-color="#ffd3f6"/><stop offset="0.6087" stop-color="#ffcdef"/><stop offset="0.6522" stop-color="#ffc7e8"/><stop offset="0.6957" stop-color="#ffc2e2"/><stop offset="0.7391" stop-color="#ffbcdc"/><stop offset="0.7826" stop-color="#ffb7d6"/><stop offset="0.8261" stop-color="#ffb2d0"/><stop offset="0.8696" stop-color="#ffadcb"/><stop offset="0.9130" stop-color="#ffa8c6"/><stop offset="0.9565" stop-color="#ffa4c1"/><stop offset="1.0000" stop-color="#ffa0bc"/></linearGradient>
<linearGradient id="c60"><stop offset="0.0000" stop-color="#acddff"/><stop offset="0.0435" stop-color="#b3dcff"/><stop offset="0.0870" stop-color="#b9dcff"/><stop offset="0.1304" stop-color="#c0dcff"/><stop offset="0.1739" stop-color="#c7dcff"/><stop offset="0.2174" stop-color="#cedbff"/><stop offset="0.2609" stop-color="#d5dbff"/><stop offset="0.3043" stop-color="#dcdbff"/><stop offset="0.3478" stop-color="#e3dbff"/><stop offset="0.3913" stop-color="#eadbff"/><stop offset="0.4348" stop-color="#f2daff"/><stop offset="0.4783" stop-color="#f9daff"/><stop offset="0.5217" stop-color="#ffd9fe"/><stop offset="0.5652" stop-color="#ffd2f6"/><stop offset="0.6087" stop-color="#ffccef"/><stop offset="0.6522" stop-color="#ffc6e9"/><stop offset="0.6957" stop-color="#ffc0e2"/><stop offset="0.7391" stop-color="#ffbbdc"/><stop offset="0.7826" stop-color="#ffb6d6"/><stop offset="0.8261" stop-color="#ffb1d1"/><stop offset="0.8696" stop-color="#ffaccb"/><stop offset="0.9130" stop-color="#ffa7c6"/><stop offset="0.9565" stop-color="#ffa3c1"/><stop offset="1.0000" stop-color="#ff9fbc"/></linearGradient>
<linearGradient id="c61"><stop offset="0.0000" stop-color="#acdbff"/><stop offset="0.0435" stop-color="#b3dbff"/><stop offset="0.0870" stop-color="#b9dbff"/><stop offset="0.1304" stop-color="#c0dbff"/><stop offset="0.1739" stop-color="#c7daff"/><stop offset="0.2174" stop-color="#cedaff"/><stop offset="0.2609" stop-color="#d5daff"/><stop offset="0.3043" stop-color="#dcdaff"/><stop offset="0.3478" stop-color="#e3d9ff"/><stop offset="0.3913" stop-color="#ead9ff"/><stop offset="0.4348" stop-color="#f2d9ff"/><stop offset="0.4783" stop-color="#f9d9ff"/><stop offset="0.5217" stop-color="#ffd7fe"/><stop offset="0.5652" stop-color="#ffd1f6"/><stop offset="0.6087" stop-color="#ffcbef"/><stop offset="0.6522" stop-color="#ffc5e9"/><stop offset="0.6957" stop-color="#ffbfe2"/><stop offset="0.7391" stop-color="#ffbadc"/><stop offset="0.7826" stop-color="#ffb5d6"/><stop offset="0.8261" stop-color="#ffb0d1"/><stop offset="0.8696" stop-color="#ffabcb"/><stop offset="0.9130" stop-color="#ffa6c6"/><stop offset="0.9565" stop-color="#ffa2c1"/><stop offset="1.0000" stop-color="#ff9ebc"/></linearGradient>
<linearGradient id="c62"><stop offset="0.0000" stop-color="#acdaff"/><stop offset="0.0435" stop-color="#b3daff"/><stop offset="0.0870" stop-color="#bad9ff"/><stop offset="0.1304" stop-color="#c0d9ff"/><stop offset="0.1739" stop-color="#c7d9ff"/><stop offset="0.2174" stop-color="#ced9ff"/><stop offset="0.2609" stop-color="#d5d8ff"/><stop offset="0.3043" stop-color="#dcd8ff"/><stop offset="0.3478" stop-color="#e3d8ff"/><stop offset="0.3913" stop-color="#ead8ff"/><stop offset="0.4348" stop-color="#f1d7ff"/><stop offset="0.4783" stop-color="#f9d7ff"/><stop offset="0.5217" stop-color="#ffd6fe"/><stop offset="0.5652" stop-color="#ffcff6"/><stop offset="0.6087" stop-color="#ffc9f0"/><stop offset="0.6522" stop-color="#ffc4e9"/><stop offset="0.6957" stop-color="#ffbee3"/><stop offset="0.7391" stop-color="#ffb9dc"/><stop offset="0.7826" stop-color="#ffb3d7"/><stop offset="0.8261" stop-color="#ffaed1"/><stop offset="0.8696" stop-color="#ffaacc"/><stop offset="0.9130" stop-color="#ffa5c6"/><stop offset="0.9565" stop-color="#ffa1c1"/><stop offset="1.0000" stop-color="#ff9dbd"/></linearGradient>
<linearGradient id="c63"><stop offset="0.0000" stop-color="#acd8ff"/><stop offset="0.0435" stop-color="#b3d8ff"/><stop offset="0.0870" stop-color="#bad8ff"/><stop offset="0.1304" stop-color="#c0d8ff"/><stop offset="0.1739" stop-color="#c7d8ff"/><stop offset="0.2174" stop-color="#ced7ff"/><stop offset="0.2609" stop-color="#d5d7ff"/><stop offset="0.3043" stop-color="#dcd7ff"/><stop offset="0.3478" stop-color="#e3d7ff"/><stop offset="0.3913" stop-color="#ead6ff"/><stop offset="0.4348" stop-color="#f1d6ff"/><stop offset="0.4783" stop-color="#f9d6ff"/><stop offset="0.5217" stop-color="#ffd4fe"/><stop offset="0.5652" stop-color="#ffcef7"/><stop offset="0.6087" stop-color="#ffc8f0"/><stop offset="0.6522" stop-color="#ffc2e9"/><stop offset="0.6957" stop-color="#ffbde3"/><stop offset="0.7391" stop-color="#ffb7dd"/><stop offset="0.7826" stop-color="#ffb2d7"/><stop offset="0.8261" stop-color="#ffadd1"/><stop offset="0.8696" stop-color="#ffa9cc"/><stop offset="0.9130" stop-color="#ffa4c7"/><stop offset="0.9565" stop-color="#ffa0c2"/><stop offset="1.0000" stop-color="#ff9cbd"/></linearGradient>
<linearGradient id="c64"><stop offset="0.0000" stop-color="#add7ff"/><stop offset="0.0435" stop-color="#b3d7ff"/><stop offset="0.0870" stop-color="#bad7ff"/><stop offset="0.1304" stop-color="#c0d6ff"/><stop offset="0.1739" stop-color="#c7d6ff"/><stop offset="0.2174" stop-color="#ced6ff"/><stop offset="0.2609" stop-color="#d5d6ff"/><stop offset="0.3043" stop-color="#dcd5ff"/><stop offset="0.3478" stop-color="#e3d5ff"/><stop offset="0.3913" stop-color="#ead5ff"/><stop offset="0.4348" stop-color="#f1d5ff"/><stop offset="0.4783" stop-color="#f9d4ff"/><stop offset="0.5217" stop-color="#ffd3fe"/><stop offset="0.5652" stop-color="#ffcdf7"/><stop offset="0.6087" stop-color="#ffc7f0"/><stop offset="0.6522" stop-color="#ffc1e9"/><stop offset="0.6957" stop-color="#ffbce3"/><stop offset="0.7391" stop-color="#ffb6dd"/><stop offset="0.7826" stop-color="#ffb1d7"/><stop offset="0.8261" stop-color="#ffacd1"/><stop offset="0.8696" stop-color="#ffa8cc"/><stop offset="0.9130" stop-color="#ffa3c7"/><stop offset="0.9565" stop-color="#ff9fc2"/><stop offset="1.0000" stop-color="#ff9bbd"/></linearGradient>
<linearGradient id="c65"><stop offset="0.0000" stop-color="#add6ff"/><stop offset="0.0435" stop-color="#b3d6ff"/><stop offset="0.0870" stop-color="#bad5ff"/><stop offset="0.1304" stop-color="#c0d5ff"/><stop offset="0.1739" stop-color="#c7d5ff"/><stop offset="0.2174" stop-color="#ced4ff"/><stop offset="0.2609" stop-color="#d5d4ff"/><stop offset="0.3043" stop-color="#dcd4ff"/><stop offset="0.3478" stop-color="#e3d4ff"/><stop offset="0.3913" stop-color="#ead3ff"/><stop offset="0.4348" stop-color="#f1d3ff"/><stop offset="0.4783" stop-color="#f9d3ff"/><stop offset="0.5217" stop-color="#ffd2fe"/><stop offset="0.5652" stop-color="#ffccf7"/><stop offset="0.6087" stop-color="#ffc6f0"/><stop offset="0.6522" stop-color="#ffc0e9"/><stop offset="0.6957" stop-color="#ffbae3"/><stop offset="0.7391" stop-color="#ffb5dd"/><stop offset="0.7826" stop-color="#ffb0d7"/><stop offset="0.8261" stop-color="#ffabd1"/><stop offset="0.8696" stop-color="#ffa7cc"/><stop offset="0.9130" stop-color="#ffa2c7"/><stop offset="0.9565" stop-color="#ff9ec2"/><stop offset="1.0000" stop-color="#ff9abd"/></linearGradient>
<linearGradient id="c66"><stop offset="0.0000" stop-color="#add4ff"/><stop offset="0.0435" stop-color="#b3d4ff"/><stop offset="0.0870" stop-color="#bad4ff"/><stop offset="0.1304" stop-color="#c0d4ff"/><stop offset="0.1739" stop-color="#c7d3ff"/><stop offset="0.2174" stop-color="#ced3ff"/><stop offset="0.2609" stop-color="#d5d3ff"/><stop offset="0.3043" stop-color="#dcd3ff"/><stop offset="0.3478" stop-color="#e3d2ff"/><stop offset="0.3913" stop-color="#ead2ff"/><stop offset="0.4348" stop-color="#f1d2ff"/><stop offset="0.4783" stop-color="#f8d1ff"/><stop offset="0.5217" stop-color="#ffd0fe"/><stop offset="0.5652" stop-color="#ffcaf7"/><stop offset="0.6087" stop-color="#ffc4f0"/><stop offset="0.6522" stop-color="#ffbfe9"/><stop offset="0.6957" stop-color="#ffb9e3"/><stop offset="0.7391" stop-color="#ffb4dd"/><stop offset="0.7826" stop-color="#ffafd7"/><stop offset="0.8261" stop-color="#ffaad2"/><stop offset="0.8696" stop-color="#ffa6cc"/><stop offset="0.9130" stop-color="#ffa1c7"/><stop offset="0.9565" stop-color="#ff9dc2"/><stop offset="1.0000" stop-color="#ff99bd"/></linearGradient>
<linearGradient id="c67"><stop offset="0.0000" stop-color="#add3ff"/><stop offset="0.0435" stop-color="#b3d3ff"/><stop offset="0.0870" stop-color="#bad3ff"/><stop offset="0.1304" stop-color="#c0d2ff"/><stop offset="0.1739" stop-color="#c7d2ff"/><stop offset="0.2174" stop-color="#ced2ff"/><stop offset="0.2609" stop-color="#d5d1ff"/><stop offset="0.3043" stop-color="#dcd1ff"/><stop offset="0.3478" stop-color="#e3d1ff"/><stop offset="0.3913" stop-color="#ead1ff"/><stop offset="0.4348" stop-color="#f1d0ff"/><stop offset="0.4783" stop-color="#f8d0ff"/><stop offset="0.5217" stop-color="#ffcffe"/><stop offset="0.5652" stop-color="#ffc9f7"/><stop offset="0.6087" stop-color="#ffc3f0"/><stop offset="0.6522" stop-color="#ffbdea"/><stop offset="0.6957" stop-color="#ffb8e3"/><stop offset="0.7391" stop-color="#ffb3dd"/><stop offset="0.7826" stop-color="#ffaed7"/><stop offset="0.8261" stop-color="#ffa9d2"/><stop offset="0.8696" stop-color="#ffa4cc"/><stop offset="0.9130" stop-color="#ffa0c7"/><stop offset="0.9565" stop-color="#ff9cc2"/><stop offset="1.0000" stop-color="#ff98bd"/></linearGradient>
<linearGradient id="c68"><stop offset="0.0000" stop-color="#add2ff"/><stop offset="0.0435" stop-color="#b3d2ff"/><stop offset="0.0870" stop-color="#bad1ff"/><stop offset="0.1304" stop-color="#c0d1ff"/><stop offset="0.1739" stop-color="#c7d1ff"/><stop offset="0.2174" stop-color="#ced0ff"/><stop offset="0.2609" stop-color="#d5d0ff"/><stop offset="0.3043" stop-color="#dcd0ff"/><stop offset="0.3478" stop-color="#e3cfff"/><stop offset="0.3913" stop-color="#eacfff"/><stop offset="0.4348" stop-color="#f1cfff"/><stop offset="0.4783" stop-color="#f8cfff"/><stop offset="0.5217" stop-color="#ffcefe"/><stop offset="0.5652" stop-color="#ffc8f7"/><stop offset="0.6087" stop-color="#ffc2f0"/><stop offset="0.6522" stop-color="#ffbcea"/><stop offset="0.6957" stop-color="#ffb7e3"/><stop offset="0.7391" stop-color="#ffb2dd"/><stop offset="0.7826" stop-color="#ffadd8"/><stop offset="0.8261" stop-color="#ffa8d2"/><stop offset="0.8696" stop-color="#ffa3cd"/><stop offset="0.9130" stop-color="#ff9fc7"/><stop offset="0.9565" stop-color="#ff9bc2"/><stop offset="1.0000" stop-color="#ff97be"/></linearGradient>
<linearGradient id="c69"><stop offset="0.0000" stop-color="#add0ff"/><stop offset="0.0435" stop-color="#b3d0ff"/><stop offset="0.0870" stop-color="#bad0ff"/><stop offset="0.1304" stop-color="#c1d0ff"/><stop offset="0.1739" stop-color="#c7cfff"/><stop offset="0.2174" stop-color="#cecfff"/><stop offset="0.2609" stop-color="#d5cfff"/><stop offset="0.3043" stop-color="#dcceff"/><stop offset="0.3478" stop-color="#e3ceff"/><stop offset="0.3913" stop-color="#eaceff"/><stop offset="0.4348" stop-color="#f1cdff"/><stop offset="0.4783" stop-color="#f8cdff"/><stop offset="0.5217" stop-color="#ffccff"/><stop offset="0.5652" stop-color="#ffc6f7"/><stop offset="0.6087" stop-color="#ffc1f0"/><stop offset="0.6522" stop-color="#ffbbea"/><stop offset="0.6957" stop-color="#ffb6e4"/><stop offset="0.7391" stop-color="#ffb1de"/><stop offset="0.7826" stop-color="#ffacd8"/><stop offset="0.8261" stop-color="#ffa7d2"/><stop offset="0.8696" stop-color="#ffa2cd"/><stop offset="0.9130" stop-color="#ff9ec8"/><stop offset="0.9565" stop-color="#ff9ac3"/><stop offset="1.0000" stop-color="#ff96be"/></linearGradient>
<linearGradient id="c70"><stop offset="0.0000" stop-color="#adcfff"/><stop offset="0.0435" stop-color="#b4cfff"/><stop offset="0.0870" stop-color="#bacfff"/><stop offset="0.1304" stop-color="#c1ceff"/><stop offset="0.1739" stop-color="#c7ceff"/><stop offset="0.2174" stop-color="#ceceff"/><stop offset="0.2609" stop-color="#d5cdff"/><stop offset="0.3043" stop-color="#dccdff"/><stop offset="0.3478" stop-color="#e3cdff"/><stop offset="0.3913" stop-color="#eaccff"/><stop offset="0.4348" stop-color="#f1ccff"/><stop offset="0.4783" stop-color="#f8ccff"/><stop offset="0.5217" stop-color="#ffcbff"/><stop offset="0.5652" stop-color="#ffc5f7"/><stop offset="0.6087" stop-color="#ffbff1"/><stop offset="0.6522" stop-color="#ffbaea"/><stop offset="0.6957" stop-color="#ffb5e4"/><stop offset="0.7391" stop-color="#ffafde"/><stop offset="0.7826" stop-color="#ffabd8"/><stop offset="0.8261" stop-color="#ffa6d2"/><stop offset="0.8696" stop-color="#ffa1cd"/><stop offset="0.9130" stop-color="#ff9dc8"/><stop offset="0.9565" stop-color="#ff99c3"/><stop offset="1.0000" stop-color="#ff95be"/></linearGradient>
<linearGradient id="c71"><stop offset="0.0000" stop-color="#adceff"/><stop offset="0.0435" stop-color="#b4ceff"/><stop offset="0.0870" stop-color="#bacdff"/><stop offset="0.1304" stop-color="#c1cdff"/><stop offset="0.1739" stop-color="#c7cdff"/><stop offset="0.2174" stop-color="#ceccff"/><stop offset="0.2609" stop-color="#d5ccff"/><stop offset="0.3043" stop-color="#dcccff"/><stop offset="0.3478" stop-color="#e3cbff"/><stop offset="0.3913" stop-color="#eacbff"/><stop offset="0.4348" stop-color="#f1cbff"/><stop offset="0.4783" stop-color="#f8caff"/><stop offset="0.5217" stop-color="#ffcaff"/><stop offset="0.5652" stop-color="#ffc4f8"/><stop offset="0.6087" stop-color="#ffbef1"/><stop offset="0.6522" stop-color="#ffb9ea"/><stop offset="0.6957" stop-color="#ffb3e4"/><stop offset="0.7391" stop-color="#ffaede"/><stop offset="0.7826" stop-color="#ffa9d8"/><stop offset="0.8261" stop-color="#ffa5d2"/><stop offset="0.8696" stop-color="#ffa0cd"/><stop offset="0.9130" stop-color="#ff9cc8"/><stop offset="0.9565" stop-color="#ff98c3"/><stop offset="1.0000" stop-color="#ff94be"/></linearGradient>
<linearGradient id="c72"><stop offset="0.0000" stop-color="#adcdff"/><stop offset="0.0435" stop-color="#b4ccff"/><stop offset="0.0870" stop-color="#baccff"/><stop offset="0.1304" stop-color="#c1ccff"/><stop offset="0.1739" stop-color="#c7cbff"/><stop offset="0.2174" stop-color="#cecbff"/><stop offset="0.2609" stop-color="#d5cbff"/><stop offset="0.3043" stop-color="#dccaff"/><stop offset="0.3478" stop-color="#e3caff"/><stop offset="0.3913" stop-color="#eacaff"/><stop offset="0.4348" stop-color="#f1c9ff"/><stop offset="0.4783" stop-color="#f8c9ff"/><stop offset="0.5217" stop-color="#ffc9ff"/><stop offset="0.5652" stop-color="#ffc3f8"/><stop offset="0.6087" stop-color="#ffbdf1"/><stop offset="0.6522" stop-color="#ffb7ea"/><stop offset="0.6957" stop-color="#ffb2e4"/><stop offset="0.7391" stop-color="#ffadde"/><stop offset="0.7826" stop-color="#ffa8d8"/><stop offset="0.8261" stop-color="#ffa4d3"/><stop offset="0.8696" stop-color="#ff9fcd"/><stop offset="0.9130" stop-color="#ff9bc8"/><stop offset="0.9565" stop-color="#ff97c3"/><stop offset="1.0000" stop-color="#ff93be"/></linearGradient>
<clipPath id="cieclip"><rect x="45.0" y="321.1" width="230.5" height="145.5"/></clipPath>
</defs>
<g clip-path="url(#cieclip)">
<rect x="45.0" y="321" width="230.5" height="3" fill="url(#c0)"/>
<rect x="45.0" y="323" width="230.5" height="3" fill="url(#c1)"/>
<rect x="45.0" y="325" width="230.5" height="3" fill="url(#c2)"/>
<rect x="45.0" y="327" width="230.5" height="3" fill="url(#c3)"/>
<rect x="45.0" y="329" width="230.5" height="3" fill="url(#c4)"/>
<rect x="45.0" y="331" width="230.5" height="3" fill="url(#c5)"/>
<rect x="45.0" y="333" width="230.5" height="3" fill="url(#c6)"/>
<rect x="45.0" y="335" width="230.5" height="3" fill="url(#c7)"/>
<rect x="45.0" y="337" width="230.5" height="3" fill="url(#c8)"/>
<rect x="45.0" y="339" width="230.5" height="3" fill="url(#c9)"/>
<rect x="45.0" y="341" width="230.5" height="3" fill="url(#c10)"/>
<rect x="45.0" y="343" width="230.5" height="3" fill="url(#c11)"/>
<rect x="45.0" y="345" width="230.5" height="3" fill="url(#c12)"/>
<rect x="45.0" y="347" width="230.5" height="3" fill="url(#c13)"/>
<rect x="45.0" y="349" width="230.5" height="3" fill="url(#c14)"/>
<rect x="45.0" y="351" width="230.5" height="3" fill="url(#c15)"/>
<rect x="45.0" y="353" width="230.5" height="3" fill="url(#c16)"/>
<rect x="45.0" y="355" width="230.5" height="3" fill="url(#c17)"/>
<rect x="45.0" y="357" width="230.5" height="3" fill="url(#c18)"/>
<rect x="45.0" y="359" width="230.5" height="3" fill="url(#c19)"/>
<rect x="45.0" y="361" width="230.5" height="3" fill="url(#c20)"/>
<rect x="45.0" y="363" width="230.5" height="3" fill="url(#c21)"/>
<rect x="45.0" y="365" width="230.5" height="3" fill="url(#c22)"/>
<rect x="45.0" y="367" width="230.5" height="3" fill="url(#c23)"/>
<rect x="45.0" y="369" width="230.5" height="3" fill="url(#c24)"/>
<rect x="45.0" y="371" width="230.5" height="3" fill="url(#c25)"/>
<rect x="45.0" y="373" width="230.5" height="3" fill="url(#c26)"/>
<rect x="45.0" y="375" width="230.5" height="3" fill="url(#c27)"/>
<rect x="45.0" y="377" width="230.5" height="3" fill="url(#c28)"/>
<rect x="45.0" y="379" width="230.5" height="3" fill="url(#c29)"/>
<rect x="45.0" y="381" width="230.5" height="3" fill="url(#c30)"/>
<rect x="45.0" y="383" width="230.5" height="3" fill="url(#c31)"/>
<rect x="45.0" y="385" width="230.5" height="3" fill="url(#c32)"/>
<rect x="45.0" y="387" width="230.5" height="3" fill="url(#c33)"/>
<rect x="45.0" y="389" width="230.5" height="3" fill="url(#c34)"/>
<rect x="45.0" y="391" width="230.5" height="3" fill="url(#c35)"/>
<rect x="45.0" y="393" width="230.5" height="3" fill="url(#c36)"/>
<rect x="45.0" y="395" width="230.5" height="3" fill="url(#c37)"/>
<rect x="45.0" y="397" width="230.5" height="3" fill="url(#c38)"/>
<rect x="45.0" y="399" width="230.5" height="3" fill="url(#c39)"/>
<rect x="45.0" y="401" width="230.5" height="3" fill="url(#c40)"/>
<rect x="45.0" y="403" width="230.5" height="3" fill="url(#c41)"/>
<rect x="45.0" y="405" width="230.5" height="3" fill="url(#c42)"/>
<rect x="45.0" y="407" width="230.5" height="3" fill="url(#c43)"/>
<rect x="45.0" y="409" width="230.5" height="3" fill="url(#c44)"/>
<rect x="45.0" y="411" width="230.5" height="3" fill="url(#c45)"/>
<rect x="45.0" y="413" width="230.5" height="3" fill="url(#c46)"/>
<rect x="45.0" y="415" width="230.5" height="3" fill="url(#c47)"/>
<rect x="45.0" y="417" width="230.5" height="3" fill="url(#c48)"/>
<rect x="45.0" y="419" width="230.5" height="3" fill="url(#c49)"/>
<rect x="45.0" y="421" width="230.5" height="3" fill="url(#c50)"/>
<rect x="45.0" y="423" width="230.5" height="3" fill="url(#c51)"/>
<rect x="45.0" y="425" width="230.5" height="3" fill="url(#c52)"/>
<rect x="45.0" y="427" width="230.5" height="3" fill="url(#c53)"/>
<rect x="45.0" y="429" width="230.5" height="3" fill="url(#c54)"/>
<rect x="45.0" y="431" width="230.5" height="3" fill="url(#c55)"/>
<rect x="45.0" y="433" width="230.5" height="3" fill="url(#c56)"/>
<rect x="45.0" y="435" width="230.5" height="3" fill="url(#c57)"/>
<rect x="45.0" y="437" width="230.5" height="3" fill="url(#c58)"/>
<rect x="45.0" y="439" width="230.5" height="3" fill="url(#c59)"/>
<rect x="45.0" y="441" width="230.5" height="3" fill="url(#c60)"/>
<rect x="45.0" y="443" width="230.5" height="3" fill="url(#c61)"/>
<rect x="45.0" y="445" width="230.5" height="3" fill="url(#c62)"/>
<rect x="45.0" y="447" width="230.5" height="3" fill="url(#c63)"/>
<rect x="45.0" y="449" width="230.5" height="3" fill="url(#c64)"/>
<rect x="45.0" y="451" width="230.5" height="3" fill="url(#c65)"/>
<rect x="45.0" y="453" width="230.5" height="3" fill="url(#c66)"/>
<rect x="45.0" y="455" width="230.5" height="3" fill="url(#c67)"/>
<rect x="45.0" y="457" width="230.5" height="3" fill="url(#c68)"/>
<rect x="45.0" y="459" width="230.5" height="3" fill="url(#c69)"/>
<rect x="45.0" y="461" width="230.5" height="3" fill="url(#c70)"/>
<rect x="45.0" y="463" width="230.5" height="3" fill="url(#c71)"/>
<rect x="45.0" y="465" width="230.5" height="3" fill="url(#c72)"/>
</g>
<rect x="45.5" y="321.6" width="229.5" height="144.5" fill="none" stroke="#fff" stroke-opacity="0.35" stroke-width="1"/>
<text x="149.8" y="319.0" font-size="8" fill="#d6d6d6" stroke="#d6d6d6" stroke-width="0.25" text-anchor="middle">CIE 1931 xy</text>
<rect x="41.5" y="333.40" width="3.5" height="1" fill="#d6d6d6"/><text x="41.3" y="336.90" font-size="7.7" fill="#d6d6d6" stroke="#d6d6d6" stroke-width="0.3" text-anchor="end">0,35</text>
<rect x="41.5" y="362.25" width="3.5" height="1" fill="#d6d6d6"/><text x="41.3" y="365.75" font-size="7.7" fill="#d6d6d6" stroke="#d6d6d6" stroke-width="0.3" text-anchor="end">0,34</text>
<rect x="41.5" y="391.10" width="3.5" height="1" fill="#d6d6d6"/><text x="41.3" y="394.60" font-size="7.7" fill="#d6d6d6" stroke="#d6d6d6" stroke-width="0.3" text-anchor="end">0,33</text>
<rect x="41.5" y="419.95" width="3.5" height="1" fill="#d6d6d6"/><text x="41.3" y="423.45" font-size="7.7" fill="#d6d6d6" stroke="#d6d6d6" stroke-width="0.3" text-anchor="end">0,32</text>
<rect x="41.5" y="448.80" width="3.5" height="1" fill="#d6d6d6"/><text x="41.3" y="452.30" font-size="7.7" fill="#d6d6d6" stroke="#d6d6d6" stroke-width="0.3" text-anchor="end">0,31</text>
<rect x="54.50" y="466.6" width="1" height="3.6" fill="#d6d6d6"/><text x="55.00" y="479.4" font-size="7.7" fill="#d6d6d6" stroke="#d6d6d6" stroke-width="0.3" text-anchor="middle">0,29</text>
<rect x="100.60" y="466.6" width="1" height="3.6" fill="#d6d6d6"/><text x="101.10" y="479.4" font-size="7.7" fill="#d6d6d6" stroke="#d6d6d6" stroke-width="0.3" text-anchor="middle">0,3</text>
<rect x="146.70" y="466.6" width="1" height="3.6" fill="#d6d6d6"/><text x="147.20" y="479.4" font-size="7.7" fill="#d6d6d6" stroke="#d6d6d6" stroke-width="0.3" text-anchor="middle">0,31</text>
<rect x="192.80" y="466.6" width="1" height="3.6" fill="#d6d6d6"/><text x="193.30" y="479.4" font-size="7.7" fill="#d6d6d6" stroke="#d6d6d6" stroke-width="0.3" text-anchor="middle">0,32</text>
<rect x="238.90" y="466.6" width="1" height="3.6" fill="#d6d6d6"/><text x="239.40" y="479.4" font-size="7.7" fill="#d6d6d6" stroke="#d6d6d6" stroke-width="0.3" text-anchor="middle">0,33</text>
<rect x="161.2" y="380.3" width="4.9" height="8.3" rx="2.45" fill="#000"/><rect x="162.2" y="381.3" width="2.9" height="4.5" rx="1.45" fill="#fff"/><rect x="155.4" y="390.4" width="8.3" height="7.8" fill="#fff" stroke="#111" stroke-width="1"/>
<rect x="328.8" y="99.5" width="654.0999999999999" height="303.2" fill="#232323"/>
<rect x="324.8" y="99.00" width="658.0999999999999" height="1" fill="#9a9a9a"/><text x="324.6" y="102.50" font-size="7.7" fill="#d6d6d6" stroke="#d6d6d6" stroke-width="0.3" text-anchor="end">1000</text>
<rect x="324.8" y="129.32" width="658.0999999999999" height="1" fill="#6a6a6a"/><text x="324.6" y="132.82" font-size="7.7" fill="#d6d6d6" stroke="#d6d6d6" stroke-width="0.3" text-anchor="end">900</text>
<rect x="324.8" y="159.64" width="658.0999999999999" height="1" fill="#6a6a6a"/><text x="324.6" y="163.14" font-size="7.7" fill="#d6d6d6" stroke="#d6d6d6" stroke-width="0.3" text-anchor="end">800</text>
<rect x="324.8" y="189.96" width="658.0999999999999" height="1" fill="#6a6a6a"/><text x="324.6" y="193.46" font-size="7.7" fill="#d6d6d6" stroke="#d6d6d6" stroke-width="0.3" text-anchor="end">700</text>
<rect x="324.8" y="220.28" width="658.0999999999999" height="1" fill="#6a6a6a"/><text x="324.6" y="223.78" font-size="7.7" fill="#d6d6d6" stroke="#d6d6d6" stroke-width="0.3" text-anchor="end">600</text>
<rect x="324.8" y="250.60" width="658.0999999999999" height="1" fill="#6a6a6a"/><text x="324.6" y="254.10" font-size="7.7" fill="#d6d6d6" stroke="#d6d6d6" stroke-width="0.3" text-anchor="end">500</text>
<rect x="324.8" y="280.92" width="658.0999999999999" height="1" fill="#6a6a6a"/><text x="324.6" y="284.42" font-size="7.7" fill="#d6d6d6" stroke="#d6d6d6" stroke-width="0.3" text-anchor="end">400</text>
<rect x="324.8" y="311.24" width="658.0999999999999" height="1" fill="#6a6a6a"/><text x="324.6" y="314.74" font-size="7.7" fill="#d6d6d6" stroke="#d6d6d6" stroke-width="0.3" text-anchor="end">300</text>
<rect x="324.8" y="341.56" width="658.0999999999999" height="1" fill="#6a6a6a"/><text x="324.6" y="345.06" font-size="7.7" fill="#d6d6d6" stroke="#d6d6d6" stroke-width="0.3" text-anchor="end">200</text>
<rect x="324.8" y="371.88" width="658.0999999999999" height="1" fill="#6a6a6a"/><text x="324.6" y="375.38" font-size="7.7" fill="#d6d6d6" stroke="#d6d6d6" stroke-width="0.3" text-anchor="end">100</text>
<rect x="324.8" y="402.20" width="658.0999999999999" height="1" fill="#9a9a9a"/><text x="324.6" y="405.70" font-size="7.7" fill="#d6d6d6" stroke="#d6d6d6" stroke-width="0.3" text-anchor="end">0</text>
<rect x="331.07" y="165.81" width="24" height="236.89" fill="#181818"/><rect x="332.07" y="166.81" width="22" height="235.89" fill="url(#bare)"/><rect x="333.07" y="166.81" width="20" height="235.89" fill="url(#bar)"/>
<rect x="360.80" y="165.20" width="24" height="237.50" fill="#181818"/><rect x="361.80" y="166.20" width="22" height="236.50" fill="url(#bare)"/><rect x="362.80" y="166.20" width="20" height="236.50" fill="url(#bar)"/>
<rect x="390.53" y="164.60" width="24" height="238.10" fill="#181818"/><rect x="391.53" y="165.60" width="22" height="237.10" fill="url(#bare)"/><rect x="392.53" y="165.60" width="20" height="237.10" fill="url(#bar)"/>
<rect x="420.26" y="164.29" width="24" height="238.41" fill="#181818"/><rect x="421.26" y="165.29" width="22" height="237.41" fill="url(#bare)"/><rect x="422.26" y="165.29" width="20" height="237.41" fill="url(#bar)"/>
<rect x="449.99" y="163.69" width="24" height="239.01" fill="#181818"/><rect x="450.99" y="164.69" width="22" height="238.01" fill="url(#bare)"/><rect x="451.99" y="164.69" width="20" height="238.01" fill="url(#bar)"/>
<rect x="479.72" y="163.08" width="24" height="239.62" fill="#181818"/><rect x="480.72" y="164.08" width="22" height="238.62" fill="url(#bare)"/><rect x="481.72" y="164.08" width="20" height="238.62" fill="url(#bar)"/>
<rect x="509.46" y="162.78" width="24" height="239.92" fill="#181818"/><rect x="510.46" y="163.78" width="22" height="238.92" fill="url(#bare)"/><rect x="511.46" y="163.78" width="20" height="238.92" fill="url(#bar)"/>
<rect x="539.19" y="162.48" width="24" height="240.22" fill="#181818"/><rect x="540.19" y="163.48" width="22" height="239.22" fill="url(#bare)"/><rect x="541.19" y="163.48" width="20" height="239.22" fill="url(#bar)"/>
<rect x="568.92" y="162.17" width="24" height="240.53" fill="#181818"/><rect x="569.92" y="163.17" width="22" height="239.53" fill="url(#bare)"/><rect x="570.92" y="163.17" width="20" height="239.53" fill="url(#bar)"/>
<rect x="598.65" y="161.87" width="24" height="240.83" fill="#181818"/><rect x="599.65" y="162.87" width="22" height="239.83" fill="url(#bare)"/><rect x="600.65" y="162.87" width="20" height="239.83" fill="url(#bar)"/>
<rect x="628.38" y="161.26" width="24" height="241.44" fill="#181818"/><rect x="629.38" y="162.26" width="22" height="240.44" fill="url(#bare)"/><rect x="630.38" y="162.26" width="20" height="240.44" fill="url(#bar)"/>
<rect x="658.12" y="160.96" width="24" height="241.74" fill="#181818"/><rect x="659.12" y="161.96" width="22" height="240.74" fill="url(#bare)"/><rect x="660.12" y="161.96" width="20" height="240.74" fill="url(#bar)"/>
<rect x="687.85" y="160.66" width="24" height="242.04" fill="#181818"/><rect x="688.85" y="161.66" width="22" height="241.04" fill="url(#bare)"/><rect x="689.85" y="161.66" width="20" height="241.04" fill="url(#bar)"/>
<rect x="717.58" y="160.35" width="24" height="242.35" fill="#181818"/><rect x="718.58" y="161.35" width="22" height="241.35" fill="url(#bare)"/><rect x="719.58" y="161.35" width="20" height="241.35" fill="url(#bar)"/>
<rect x="747.31" y="159.75" width="24" height="242.95" fill="#181818"/><rect x="748.31" y="160.75" width="22" height="241.95" fill="url(#bare)"/><rect x="749.31" y="160.75" width="20" height="241.95" fill="url(#bar)"/>
<rect x="777.04" y="159.14" width="24" height="243.56" fill="#181818"/><rect x="778.04" y="160.14" width="22" height="242.56" fill="url(#bare)"/><rect x="779.04" y="160.14" width="20" height="242.56" fill="url(#bar)"/>
<rect x="806.77" y="158.84" width="24" height="243.86" fill="#181818"/><rect x="807.77" y="159.84" width="22" height="242.86" fill="url(#bare)"/><rect x="808.77" y="159.84" width="20" height="242.86" fill="url(#bar)"/>
<rect x="836.51" y="158.53" width="24" height="244.17" fill="#181818"/><rect x="837.51" y="159.53" width="22" height="243.17" fill="url(#bare)"/><rect x="838.51" y="159.53" width="20" height="243.17" fill="url(#bar)"/>
<rect x="866.24" y="158.23" width="24" height="244.47" fill="#181818"/><rect x="867.24" y="159.23" width="22" height="243.47" fill="url(#bare)"/><rect x="868.24" y="159.23" width="20" height="243.47" fill="url(#bar)"/>
<rect x="895.97" y="157.62" width="24" height="245.08" fill="#181818"/><rect x="896.97" y="158.62" width="22" height="244.08" fill="url(#bare)"/><rect x="897.97" y="158.62" width="20" height="244.08" fill="url(#bar)"/>
<rect x="925.70" y="156.87" width="24" height="245.83" fill="#181818"/><rect x="926.70" y="157.87" width="22" height="244.83" fill="url(#bare)"/><rect x="927.70" y="157.87" width="20" height="244.83" fill="url(#bar)"/>
<rect x="955.43" y="158.53" width="24" height="244.17" fill="#181818"/><rect x="956.43" y="159.53" width="22" height="243.17" fill="url(#bare)"/><rect x="957.43" y="159.53" width="20" height="243.17" fill="url(#bar)"/>
<rect x="324.8" y="402.20" width="658.0999999999999" height="1" fill="#8c8c8c"/><rect x="328.3" y="99.5" width="1" height="303.2" fill="#9a9a9a"/><rect x="982.4" y="99.5" width="1" height="303.2" fill="#9a9a9a"/>
<polyline points="343.7,165.61 373.4,165.00 403.1,164.40 432.9,164.09 462.6,163.49 492.3,162.88 522.1,162.58 551.8,162.28 581.5,161.97 611.3,161.67 641.0,161.06 670.7,160.76 700.4,160.46 730.2,160.15 759.9,159.55 789.6,158.94 819.4,158.64 849.1,158.33 878.8,158.03 908.6,157.42 938.3,156.67 968.0,158.33" fill="none" stroke="#111" stroke-width="2.4" transform="translate(0,-1.3)"/><polyline points="343.7,165.61 373.4,165.00 403.1,164.40 432.9,164.09 462.6,163.49 492.3,162.88 522.1,162.58 551.8,162.28 581.5,161.97 611.3,161.67 641.0,161.06 670.7,160.76 700.4,160.46 730.2,160.15 759.9,159.55 789.6,158.94 819.4,158.64 849.1,158.33 878.8,158.03 908.6,157.42 938.3,156.67 968.0,158.33" fill="none" stroke="#f0e638" stroke-width="2"/>
<text x="644.5" y="96" font-size="8" fill="#d6d6d6" stroke="#d6d6d6" stroke-width="0.25" text-anchor="middle">Luminance</text>
</svg>
</body></html>
